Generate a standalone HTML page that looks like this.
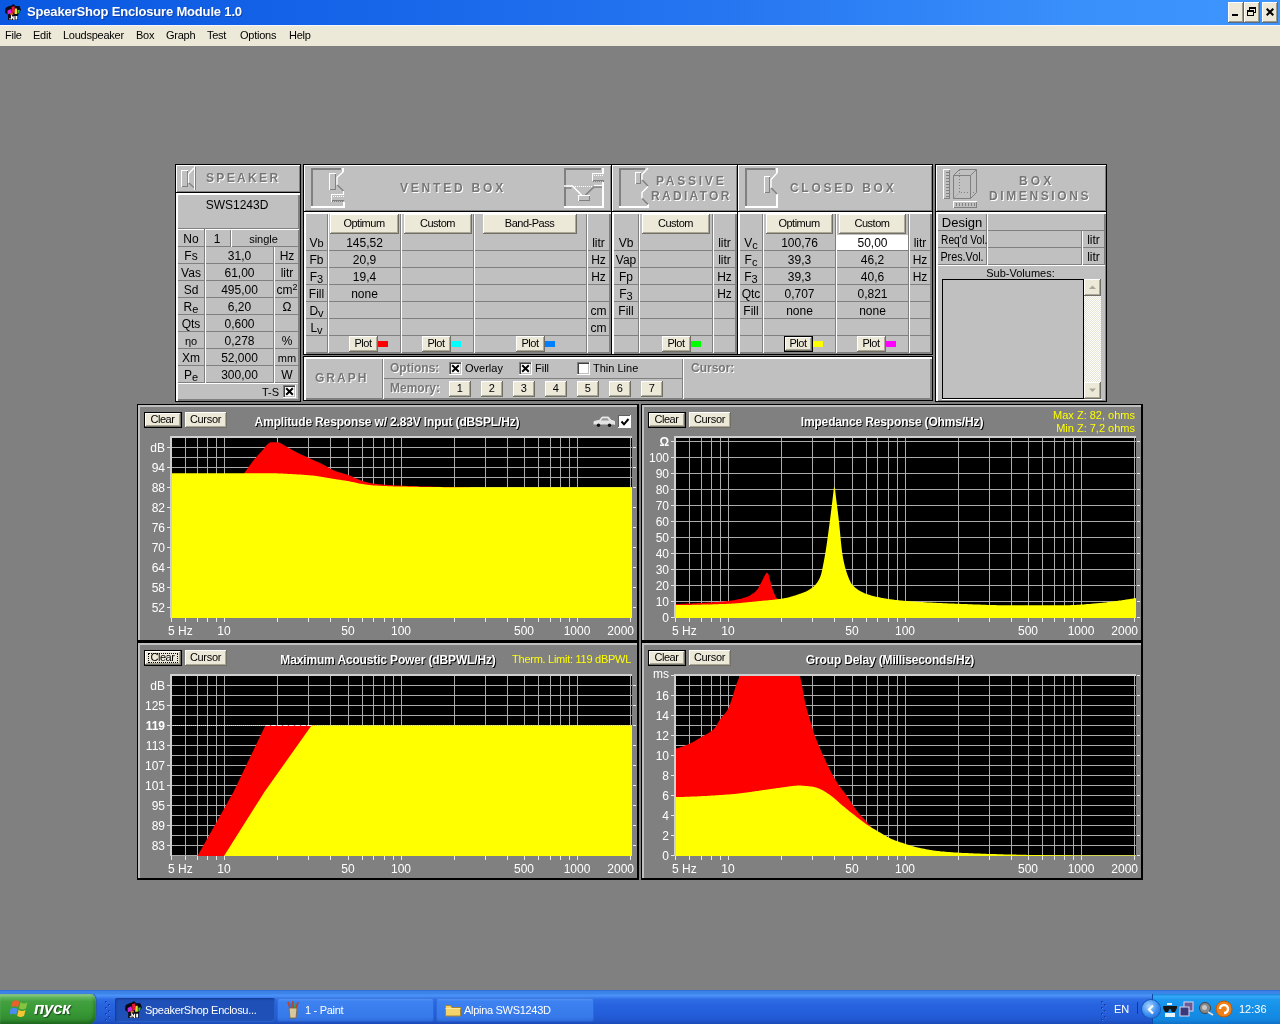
<!DOCTYPE html>
<html><head><meta charset="utf-8"><title>SpeakerShop Enclosure Module 1.0</title>
<style>
html,body{margin:0;padding:0;}
body{width:1280px;height:1024px;overflow:hidden;background:#808080;position:relative;font-family:"Liberation Sans",sans-serif;font-size:12px;color:#000;}
div,svg,span.a{position:absolute;box-sizing:border-box;}
.t{white-space:nowrap;overflow:visible;}
#root{left:0;top:0;width:1280px;height:1024px;will-change:transform;}
.hd{white-space:nowrap;font-weight:bold;color:#767676;text-shadow:1px 1px 0 #fff;letter-spacing:2.6px;font-size:12px;}
.gt{white-space:nowrap;font-weight:bold;color:#fff;text-shadow:1px 1px 0 #000;font-size:12px;}
.ax{white-space:nowrap;color:#fff;font-size:12px;}
.mn{white-space:nowrap;font-size:11px;}
</style></head><body><div id="root">
<div style="left:0px;top:0px;width:1280px;height:25px;background:linear-gradient(90deg,#0a58e0 0%,#1463e8 25%,#2574f0 55%,#3a90fb 85%,#3d95ff 100%);"></div>
<div class="t" style="left:27px;top:2px;width:300px;height:20px;line-height:20px;text-align:left;color:#fff;font-weight:bold;font-size:13px;letter-spacing:-0.17px;text-shadow:1px 1px 0 rgba(10,42,128,.55);">SpeakerShop Enclosure Module 1.0</div>
<svg style="left:5px;top:4px" width="16" height="16" viewBox="0 0 16 16"><path d="M3 2.500L6.500 1.500L8.500 0L10.500 2L14.500 2L16 6L14 9L13 11.500V16H3V11L0 8.500L0.500 4z" fill="#0a0a14"/><path d="M6.500 3l3-1 .5 6.500-3 .5z" fill="#e81830"/><path d="M2.500 6.500l3.500-1.500 1 4-4.500 1.500z" fill="#d028d8"/><path d="M10 4.500h2v5.500h-2.500z" fill="#e8e030"/><path d="M12.500 6l2.500 0-1 3-1.500 1z" fill="#38b838"/><path d="M5 9.500l3-.5 .5 1.500-3 .5z" fill="#f06020"/><rect x="4.500" y="14" width="1" height="1.500" fill="#fff"/><path d="M6.500 15.500v-3.500l2.500 3.500v-3.500" stroke="#fff" stroke-width="1.100" fill="none"/><rect x="10.500" y="12" width="1.800" height="3.500" fill="#fff"/></svg>
<div style="left:1228px;top:2px;width:16px;height:21px;background:#5a6a80;"></div>
<div style="left:1228px;top:2px;width:15px;height:20px;background:#fff;"></div>
<div style="left:1229px;top:3px;width:14px;height:19px;background:#a09a88;"></div>
<div style="left:1229px;top:3px;width:13px;height:18px;background:#ece9d8;"></div>
<div style="left:1232px;top:14px;width:6px;height:2px;background:#000;"></div>
<div style="left:1244px;top:2px;width:16px;height:21px;background:#5a6a80;"></div>
<div style="left:1244px;top:2px;width:15px;height:20px;background:#fff;"></div>
<div style="left:1245px;top:3px;width:14px;height:19px;background:#a09a88;"></div>
<div style="left:1245px;top:3px;width:13px;height:18px;background:#ece9d8;"></div>
<svg style="left:1247px;top:7px" width="10" height="10" viewBox="0 0 10 10" shape-rendering="crispEdges"><path d="M2.5 3V0.5h6v5h-2 M2.5 1.5h6" stroke="#000" fill="none"/><path d="M0.5 3.5h6v5h-6z M0.5 4.5h6" stroke="#000" fill="none"/></svg>
<div style="left:1262px;top:2px;width:16px;height:21px;background:#5a6a80;"></div>
<div style="left:1262px;top:2px;width:15px;height:20px;background:#fff;"></div>
<div style="left:1263px;top:3px;width:14px;height:19px;background:#a09a88;"></div>
<div style="left:1263px;top:3px;width:13px;height:18px;background:#ece9d8;"></div>
<svg style="left:1266px;top:8px" width="8" height="8" viewBox="0 0 8 8"><path d="M0.7 0.7 L7.3 7.3 M7.3 0.7 L0.7 7.3" stroke="#000" stroke-width="2" fill="none"/></svg>
<div style="left:0px;top:25px;width:1280px;height:21px;background:#ece9d8;"></div>
<div style="left:0px;top:25px;width:1280px;height:1px;background:#f4f6fb;"></div>
<div class="mn" style="left:5px;top:27px;width:80px;height:16px;line-height:16px;text-align:left;letter-spacing:-0.25px;">File</div>
<div class="mn" style="left:33px;top:27px;width:80px;height:16px;line-height:16px;text-align:left;letter-spacing:-0.25px;">Edit</div>
<div class="mn" style="left:63px;top:27px;width:80px;height:16px;line-height:16px;text-align:left;letter-spacing:-0.25px;">Loudspeaker</div>
<div class="mn" style="left:136px;top:27px;width:80px;height:16px;line-height:16px;text-align:left;letter-spacing:-0.25px;">Box</div>
<div class="mn" style="left:166px;top:27px;width:80px;height:16px;line-height:16px;text-align:left;letter-spacing:-0.25px;">Graph</div>
<div class="mn" style="left:207px;top:27px;width:80px;height:16px;line-height:16px;text-align:left;letter-spacing:-0.25px;">Test</div>
<div class="mn" style="left:240px;top:27px;width:80px;height:16px;line-height:16px;text-align:left;letter-spacing:-0.25px;">Options</div>
<div class="mn" style="left:289px;top:27px;width:80px;height:16px;line-height:16px;text-align:left;letter-spacing:-0.25px;">Help</div>
<div style="left:0px;top:990px;width:1280px;height:34px;background:linear-gradient(180deg,#2a62cc 0px,#3a80e6 1px,#3f86ea 4px,#4a93fa 5px,#4a90f6 6px,#2f6fe6 9px,#2864df 14px,#245edb 24px,#2157cf 30px,#1b49b8 34px);"></div>
<div style="left:0px;top:994px;width:96px;height:30px;background:linear-gradient(180deg,#5aa85a 0%,#67bb63 8%,#43a040 25%,#399a36 55%,#338f31 80%,#2a7a2a 100%);border-radius:0 4px 6px 0/0 9px 10px 0;box-shadow:1px 0 1px #2a5aa8, inset 0 2px 2px rgba(255,255,255,.25), inset -2px -2px 3px rgba(0,60,0,.35);"></div>
<div class="t" style="left:34px;top:999px;width:60px;height:20px;line-height:20px;text-align:left;color:#fff;font-weight:bold;font-style:italic;font-size:17px;letter-spacing:-0.4px;text-shadow:1px 1px 1px #1c4a1c;">пуск</div>
<svg style="left:10px;top:999px" width="20" height="19" viewBox="0 0 20 19"><path d="M2.5 2.5 q3.5-2.5 7 0 l-1.500 6 q-3.500-2.500-7 0z" fill="#e8602c"/><path d="M10.5 3.2 q3.500 2.500 7 0 l-1.500 6 q-3.500 2.500-7 0z" fill="#86c440"/><path d="M0.6 10 q3.500-2.500 7 0 l-1.500 6 q-3.500-2.500-7 0z" fill="#4a8cf0"/><path d="M8.6 10.7 q3.500 2.500 7 0 l-1.500 6 q-3.500 2.500-7 0z" fill="#f6c531"/></svg>
<div style="left:105px;top:1001px;width:2px;height:2px;background:#1a3fae;"></div>
<div style="left:106px;top:1002px;width:1px;height:1px;background:#4c88f2;"></div>
<div style="left:105px;top:1007px;width:2px;height:2px;background:#1a3fae;"></div>
<div style="left:106px;top:1008px;width:1px;height:1px;background:#4c88f2;"></div>
<div style="left:105px;top:1013px;width:2px;height:2px;background:#1a3fae;"></div>
<div style="left:106px;top:1014px;width:1px;height:1px;background:#4c88f2;"></div>
<div style="left:105px;top:1019px;width:2px;height:2px;background:#1a3fae;"></div>
<div style="left:106px;top:1020px;width:1px;height:1px;background:#4c88f2;"></div>
<div style="left:108px;top:1004px;width:2px;height:2px;background:#1a3fae;"></div>
<div style="left:109px;top:1005px;width:1px;height:1px;background:#4c88f2;"></div>
<div style="left:108px;top:1010px;width:2px;height:2px;background:#1a3fae;"></div>
<div style="left:109px;top:1011px;width:1px;height:1px;background:#4c88f2;"></div>
<div style="left:108px;top:1016px;width:2px;height:2px;background:#1a3fae;"></div>
<div style="left:109px;top:1017px;width:1px;height:1px;background:#4c88f2;"></div>
<div style="left:1101px;top:1001px;width:2px;height:2px;background:#1a3fae;"></div>
<div style="left:1102px;top:1002px;width:1px;height:1px;background:#4c88f2;"></div>
<div style="left:1101px;top:1007px;width:2px;height:2px;background:#1a3fae;"></div>
<div style="left:1102px;top:1008px;width:1px;height:1px;background:#4c88f2;"></div>
<div style="left:1101px;top:1013px;width:2px;height:2px;background:#1a3fae;"></div>
<div style="left:1102px;top:1014px;width:1px;height:1px;background:#4c88f2;"></div>
<div style="left:1101px;top:1019px;width:2px;height:2px;background:#1a3fae;"></div>
<div style="left:1102px;top:1020px;width:1px;height:1px;background:#4c88f2;"></div>
<div style="left:1104px;top:1004px;width:2px;height:2px;background:#1a3fae;"></div>
<div style="left:1105px;top:1005px;width:1px;height:1px;background:#4c88f2;"></div>
<div style="left:1104px;top:1010px;width:2px;height:2px;background:#1a3fae;"></div>
<div style="left:1105px;top:1011px;width:1px;height:1px;background:#4c88f2;"></div>
<div style="left:1104px;top:1016px;width:2px;height:2px;background:#1a3fae;"></div>
<div style="left:1105px;top:1017px;width:1px;height:1px;background:#4c88f2;"></div>
<div style="left:115px;top:998px;width:160px;height:24px;background:#1e50b8;border-radius:3px;box-shadow:inset 1px 1px 2px #153a90, inset -1px -1px 0 #2a62cc;"></div>

<div class="t" style="left:145px;top:1002px;width:128px;height:16px;line-height:16px;text-align:left;color:#fff;font-size:11px;letter-spacing:-0.3px;">SpeakerShop Enclosu...</div>
<svg style="left:125px;top:1001px" width="17" height="17" viewBox="0 0 16 16"><path d="M3 2.500L6.500 1.500L8.500 0L10.500 2L14.500 2L16 6L14 9L13 11.500V16H3V11L0 8.500L0.500 4z" fill="#0a0a14"/><path d="M6.500 3l3-1 .5 6.500-3 .5z" fill="#e81830"/><path d="M2.500 6.500l3.500-1.500 1 4-4.500 1.500z" fill="#d028d8"/><path d="M10 4.500h2v5.500h-2.500z" fill="#e8e030"/><path d="M12.500 6l2.500 0-1 3-1.500 1z" fill="#38b838"/><path d="M5 9.500l3-.5 .5 1.500-3 .5z" fill="#f06020"/><rect x="4.500" y="14" width="1" height="1.500" fill="#fff"/><path d="M6.500 15.500v-3.500l2.500 3.500v-3.500" stroke="#fff" stroke-width="1.100" fill="none"/><rect x="10.500" y="12" width="1.800" height="3.500" fill="#fff"/></svg>
<div style="left:277px;top:998px;width:157px;height:24px;border-radius:3px;background:linear-gradient(180deg,#5a9cf8 0%,#3d82f0 14%,#3779ea 80%,#2c68d6 100%);box-shadow:inset 0 0 0 1px rgba(36,80,190,.45);"></div>
<svg style="left:286px;top:1001px" width="14" height="18" viewBox="0 0 14 18"><path d="M3 7h8l-1 10H4z" fill="#d8c8a0" stroke="#806030" stroke-width=".8"/><path d="M4 7L2 1M7 7V0M10 7l2-6" stroke="#c04020" stroke-width="1.6"/><path d="M5.5 7L5 2" stroke="#3070d0" stroke-width="1.4"/><path d="M8.5 7L9.5 2" stroke="#30a040" stroke-width="1.4"/></svg>
<div class="t" style="left:305px;top:1002px;width:125px;height:16px;line-height:16px;text-align:left;color:#fff;font-size:11px;letter-spacing:-0.3px;">1 - Paint</div>
<div style="left:436px;top:998px;width:158px;height:24px;border-radius:3px;background:linear-gradient(180deg,#5a9cf8 0%,#3d82f0 14%,#3779ea 80%,#2c68d6 100%);box-shadow:inset 0 0 0 1px rgba(36,80,190,.45);"></div>
<svg style="left:445px;top:1003px" width="16" height="14" viewBox="0 0 16 14"><path d="M0.5 2.5h5l1.500 2h8.500v8.500h-15z" fill="#f4d36a" stroke="#a8842a"/><path d="M0.5 5.5h15" stroke="#fbe9a0"/></svg>
<div class="t" style="left:464px;top:1002px;width:126px;height:16px;line-height:16px;text-align:left;color:#fff;font-size:11px;letter-spacing:-0.3px;">Alpina SWS1243D</div>
<div style="left:1152px;top:994px;width:128px;height:30px;background:linear-gradient(180deg,#1a86e0 0%,#36a8f6 8%,#1c98ee 20%,#1590e8 50%,#1387e0 85%,#0f70c8 100%);border-left:1px solid #0e4aa8;"></div>
<div class="t" style="left:1114px;top:1001px;width:20px;height:16px;line-height:16px;text-align:left;color:#fff;font-size:11px;">EN</div>
<div style="left:1137px;top:1002px;width:1px;height:12px;background:#16378f;"></div>
<div style="left:1142px;top:1000px;width:18px;height:18px;border-radius:50%;background:radial-gradient(circle at 40% 35%,#a8d6ff,#3a8cf0 55%,#1a5cc8);box-shadow:0 0 0 1px #1a58b8;"></div>
<svg style="left:1146px;top:1004px" width="10" height="11" viewBox="0 0 10 11"><path d="M7 1.5L3 5.5l4 4" stroke="#fff" stroke-width="2.2" fill="none"/></svg>
<svg style="left:1162px;top:1002px" width="16" height="16" viewBox="0 0 16 16"><path d="M1 4h14v2l-2 4h-3L8.5 7h-1L6 10H3L1 6z" fill="#151515"/><rect x="3" y="11" width="10" height="4" fill="#fff" opacity=".9"/><rect x="5" y="1" width="5" height="2" fill="#eee"/></svg>
<svg style="left:1179px;top:1001px" width="16" height="17" viewBox="0 0 16 17"><rect x="5" y="1" width="9" height="9" fill="#6a5a9a" stroke="#d8d8f0"/><rect x="1" y="6" width="9" height="9" fill="#3a3a7a" stroke="#d8d8f0"/></svg>
<svg style="left:1198px;top:1001px" width="17" height="17" viewBox="0 0 17 17"><circle cx="7" cy="7" r="5.5" fill="#8a8a8a" stroke="#444"/><circle cx="6.5" cy="6.500" r="2.500" fill="#c8c8c8"/><path d="M10 11l5 3" stroke="#ddd" stroke-width="2"/></svg>
<svg style="left:1215px;top:1000px" width="18" height="18" viewBox="0 0 18 18"><circle cx="9" cy="9" r="8" fill="#f08018" stroke="#c05808"/><path d="M5 9a4 4 0 1 1 4 4" stroke="#fff" stroke-width="2.4" fill="none"/></svg>
<div class="t" style="left:1239px;top:1001px;width:40px;height:16px;line-height:16px;text-align:left;color:#fff;font-size:11px;">12:36</div>
<div style="left:175px;top:164px;width:126px;height:238px;background:#000;"></div>
<div style="left:176px;top:165px;width:124px;height:27px;background:#fff;"></div>
<div style="left:177px;top:166px;width:123px;height:26px;background:#808080;"></div>
<div style="left:177px;top:166px;width:122px;height:25px;background:#c0c0c0;"></div>
<div style="left:176px;top:193px;width:124px;height:208px;background:#fff;"></div>
<div style="left:178px;top:195px;width:122px;height:206px;background:#808080;"></div>
<div style="left:178px;top:195px;width:121px;height:205px;background:#c0c0c0;"></div>
<div class="hd" style="left:206px;top:170px;width:80px;height:16px;line-height:16px;text-align:left;letter-spacing:2.35px;">SPEAKER</div>
<div style="left:178px;top:228px;width:121px;height:1px;background:#808080;"></div>
<div style="left:298px;top:195px;width:1px;height:34px;background:#808080;"></div>
<div class="t" style="left:177px;top:197px;width:120px;height:16px;line-height:16px;text-align:center;">SWS1243D</div>
<div style="left:178px;top:229px;width:27px;height:1px;background:#fff;"></div>
<div style="left:204px;top:229px;width:1px;height:154px;background:#808080;"></div>
<div style="left:178px;top:382px;width:27px;height:1px;background:#808080;"></div>
<div style="left:178px;top:246px;width:26px;height:1px;background:#808080;"></div>
<div style="left:178px;top:263px;width:26px;height:1px;background:#808080;"></div>
<div style="left:178px;top:280px;width:26px;height:1px;background:#808080;"></div>
<div style="left:178px;top:297px;width:26px;height:1px;background:#808080;"></div>
<div style="left:178px;top:314px;width:26px;height:1px;background:#808080;"></div>
<div style="left:178px;top:331px;width:26px;height:1px;background:#808080;"></div>
<div style="left:178px;top:348px;width:26px;height:1px;background:#808080;"></div>
<div style="left:178px;top:365px;width:26px;height:1px;background:#808080;"></div>
<div style="left:205px;top:247px;width:1px;height:136px;background:#fff;"></div>
<div style="left:273px;top:247px;width:1px;height:136px;background:#808080;"></div>
<div style="left:206px;top:382px;width:68px;height:1px;background:#808080;"></div>
<div style="left:206px;top:263px;width:67px;height:1px;background:#808080;"></div>
<div style="left:206px;top:280px;width:67px;height:1px;background:#808080;"></div>
<div style="left:206px;top:297px;width:67px;height:1px;background:#808080;"></div>
<div style="left:206px;top:314px;width:67px;height:1px;background:#808080;"></div>
<div style="left:206px;top:331px;width:67px;height:1px;background:#808080;"></div>
<div style="left:206px;top:348px;width:67px;height:1px;background:#808080;"></div>
<div style="left:206px;top:365px;width:67px;height:1px;background:#808080;"></div>
<div style="left:274px;top:247px;width:1px;height:136px;background:#fff;"></div>
<div style="left:298px;top:247px;width:1px;height:136px;background:#808080;"></div>
<div style="left:275px;top:382px;width:24px;height:1px;background:#808080;"></div>
<div style="left:275px;top:263px;width:23px;height:1px;background:#808080;"></div>
<div style="left:275px;top:280px;width:23px;height:1px;background:#808080;"></div>
<div style="left:275px;top:297px;width:23px;height:1px;background:#808080;"></div>
<div style="left:275px;top:314px;width:23px;height:1px;background:#808080;"></div>
<div style="left:275px;top:331px;width:23px;height:1px;background:#808080;"></div>
<div style="left:275px;top:348px;width:23px;height:1px;background:#808080;"></div>
<div style="left:275px;top:365px;width:23px;height:1px;background:#808080;"></div>
<div style="left:205px;top:229px;width:94px;height:1px;background:#fff;"></div>
<div style="left:205px;top:230px;width:1px;height:17px;background:#fff;"></div>
<div style="left:230px;top:230px;width:1px;height:17px;background:#808080;"></div>
<div style="left:206px;top:246px;width:25px;height:1px;background:#808080;"></div>
<div style="left:231px;top:230px;width:1px;height:17px;background:#fff;"></div>
<div style="left:298px;top:230px;width:1px;height:17px;background:#808080;"></div>
<div style="left:232px;top:246px;width:67px;height:1px;background:#808080;"></div>
<div class="t" style="left:178px;top:231px;width:26px;height:16px;line-height:16px;text-align:center;">No</div>
<div class="t" style="left:178px;top:248px;width:26px;height:16px;line-height:16px;text-align:center;">Fs</div>
<div class="t" style="left:206px;top:248px;width:67px;height:16px;line-height:16px;text-align:center;">31,0</div>
<div class="t" style="left:275px;top:248px;width:24px;height:16px;line-height:16px;text-align:center;">Hz</div>
<div class="t" style="left:178px;top:265px;width:26px;height:16px;line-height:16px;text-align:center;">Vas</div>
<div class="t" style="left:206px;top:265px;width:67px;height:16px;line-height:16px;text-align:center;">61,00</div>
<div class="t" style="left:275px;top:265px;width:24px;height:16px;line-height:16px;text-align:center;">litr</div>
<div class="t" style="left:178px;top:282px;width:26px;height:16px;line-height:16px;text-align:center;">Sd</div>
<div class="t" style="left:206px;top:282px;width:67px;height:16px;line-height:16px;text-align:center;">495,00</div>
<div class="t" style="left:275px;top:282px;width:24px;height:16px;line-height:16px;text-align:center;">cm<span style="font-size:9px;position:relative;top:-4px;">2</span></div>
<div class="t" style="left:178px;top:299px;width:26px;height:16px;line-height:16px;text-align:center;">R<span style="font-size:11px;position:relative;top:1.500px;">e</span></div>
<div class="t" style="left:206px;top:299px;width:67px;height:16px;line-height:16px;text-align:center;">6,20</div>
<div class="t" style="left:275px;top:299px;width:24px;height:16px;line-height:16px;text-align:center;">Ω</div>
<div class="t" style="left:178px;top:316px;width:26px;height:16px;line-height:16px;text-align:center;">Qts</div>
<div class="t" style="left:206px;top:316px;width:67px;height:16px;line-height:16px;text-align:center;">0,600</div>
<div class="t" style="left:178px;top:333px;width:26px;height:16px;line-height:16px;text-align:center;"><span style="font-size:11px">ηo</span></div>
<div class="t" style="left:206px;top:333px;width:67px;height:16px;line-height:16px;text-align:center;">0,278</div>
<div class="t" style="left:275px;top:333px;width:24px;height:16px;line-height:16px;text-align:center;">%</div>
<div class="t" style="left:178px;top:350px;width:26px;height:16px;line-height:16px;text-align:center;">Xm</div>
<div class="t" style="left:206px;top:350px;width:67px;height:16px;line-height:16px;text-align:center;">52,000</div>
<div class="t" style="left:275px;top:350px;width:24px;height:16px;line-height:16px;text-align:center;"><span style="font-size:11px">mm</span></div>
<div class="t" style="left:178px;top:367px;width:26px;height:16px;line-height:16px;text-align:center;">P<span style="font-size:11px;position:relative;top:1.500px;">e</span></div>
<div class="t" style="left:206px;top:367px;width:67px;height:16px;line-height:16px;text-align:center;">300,00</div>
<div class="t" style="left:275px;top:367px;width:24px;height:16px;line-height:16px;text-align:center;">W</div>
<div class="t" style="left:205px;top:231px;width:24px;height:16px;line-height:16px;text-align:center;">1</div>
<div class="t" style="left:231px;top:231px;width:65px;height:16px;line-height:16px;text-align:center;font-size:11px;">single</div>
<div style="left:178px;top:383px;width:121px;height:1px;background:#fff;"></div>
<div style="left:178px;top:399px;width:121px;height:1px;background:#808080;"></div>
<div style="left:298px;top:383px;width:1px;height:17px;background:#808080;"></div>
<div class="t" style="left:249px;top:384px;width:30px;height:16px;line-height:16px;text-align:right;font-size:11px;">T-S</div>
<div style="left:283px;top:385px;width:13px;height:13px;background:#fff;"></div>
<div style="left:283px;top:385px;width:12px;height:12px;background:#808080;"></div>
<div style="left:284px;top:386px;width:12px;height:12px;background:#fff;"></div>
<div style="left:284px;top:386px;width:11px;height:11px;background:#404040;"></div>
<div style="left:285px;top:387px;width:10px;height:10px;background:#c0c0c0;"></div>
<div style="left:285px;top:387px;width:9px;height:9px;background:#fff;"></div>
<svg style="left:285px;top:387px" width="9" height="9" viewBox="0 0 9 9"><path d="M1.2 1.2 L7.8 7.8 M7.8 1.2 L1.2 7.8" stroke="#000" stroke-width="2" fill="none"/></svg>
<div style="left:303px;top:164px;width:630px;height:191px;background:#000;"></div>
<div style="left:304px;top:165px;width:307px;height:46px;background:#fff;"></div>
<div style="left:305px;top:166px;width:306px;height:45px;background:#808080;"></div>
<div style="left:305px;top:166px;width:305px;height:44px;background:#c0c0c0;"></div>
<div style="left:304px;top:212px;width:307px;height:142px;background:#fff;"></div>
<div style="left:306px;top:214px;width:305px;height:140px;background:#808080;"></div>
<div style="left:306px;top:214px;width:304px;height:139px;background:#c0c0c0;"></div>
<div style="left:612px;top:165px;width:125px;height:46px;background:#fff;"></div>
<div style="left:613px;top:166px;width:124px;height:45px;background:#808080;"></div>
<div style="left:613px;top:166px;width:123px;height:44px;background:#c0c0c0;"></div>
<div style="left:612px;top:212px;width:125px;height:142px;background:#fff;"></div>
<div style="left:614px;top:214px;width:123px;height:140px;background:#808080;"></div>
<div style="left:614px;top:214px;width:122px;height:139px;background:#c0c0c0;"></div>
<div style="left:738px;top:165px;width:194px;height:46px;background:#fff;"></div>
<div style="left:739px;top:166px;width:193px;height:45px;background:#808080;"></div>
<div style="left:739px;top:166px;width:192px;height:44px;background:#c0c0c0;"></div>
<div style="left:738px;top:212px;width:194px;height:142px;background:#fff;"></div>
<div style="left:740px;top:214px;width:192px;height:140px;background:#808080;"></div>
<div style="left:740px;top:214px;width:191px;height:139px;background:#c0c0c0;"></div>
<div class="hd" style="left:400px;top:180px;width:150px;height:16px;line-height:16px;text-align:left;letter-spacing:2.8px;">VENTED BOX</div>
<div style="left:327px;top:214px;width:1px;height:139px;background:#808080;"></div>
<div style="left:306px;top:352px;width:22px;height:1px;background:#808080;"></div>
<div style="left:306px;top:250px;width:21px;height:1px;background:#808080;"></div>
<div style="left:306px;top:267px;width:21px;height:1px;background:#808080;"></div>
<div style="left:306px;top:284px;width:21px;height:1px;background:#808080;"></div>
<div style="left:306px;top:301px;width:21px;height:1px;background:#808080;"></div>
<div style="left:306px;top:318px;width:21px;height:1px;background:#808080;"></div>
<div style="left:306px;top:335px;width:21px;height:1px;background:#808080;"></div>
<div style="left:328px;top:214px;width:1px;height:139px;background:#fff;"></div>
<div style="left:400px;top:214px;width:1px;height:139px;background:#808080;"></div>
<div style="left:329px;top:352px;width:72px;height:1px;background:#808080;"></div>
<div style="left:329px;top:250px;width:71px;height:1px;background:#808080;"></div>
<div style="left:329px;top:267px;width:71px;height:1px;background:#808080;"></div>
<div style="left:329px;top:284px;width:71px;height:1px;background:#808080;"></div>
<div style="left:329px;top:301px;width:71px;height:1px;background:#808080;"></div>
<div style="left:329px;top:318px;width:71px;height:1px;background:#808080;"></div>
<div style="left:329px;top:335px;width:71px;height:1px;background:#808080;"></div>
<div style="left:401px;top:214px;width:1px;height:139px;background:#fff;"></div>
<div style="left:473px;top:214px;width:1px;height:139px;background:#808080;"></div>
<div style="left:402px;top:352px;width:72px;height:1px;background:#808080;"></div>
<div style="left:402px;top:250px;width:71px;height:1px;background:#808080;"></div>
<div style="left:402px;top:267px;width:71px;height:1px;background:#808080;"></div>
<div style="left:402px;top:284px;width:71px;height:1px;background:#808080;"></div>
<div style="left:402px;top:301px;width:71px;height:1px;background:#808080;"></div>
<div style="left:402px;top:318px;width:71px;height:1px;background:#808080;"></div>
<div style="left:402px;top:335px;width:71px;height:1px;background:#808080;"></div>
<div style="left:474px;top:214px;width:1px;height:139px;background:#fff;"></div>
<div style="left:586px;top:214px;width:1px;height:139px;background:#808080;"></div>
<div style="left:475px;top:352px;width:112px;height:1px;background:#808080;"></div>
<div style="left:475px;top:250px;width:111px;height:1px;background:#808080;"></div>
<div style="left:475px;top:267px;width:111px;height:1px;background:#808080;"></div>
<div style="left:475px;top:284px;width:111px;height:1px;background:#808080;"></div>
<div style="left:475px;top:301px;width:111px;height:1px;background:#808080;"></div>
<div style="left:475px;top:318px;width:111px;height:1px;background:#808080;"></div>
<div style="left:475px;top:335px;width:111px;height:1px;background:#808080;"></div>
<div style="left:587px;top:214px;width:1px;height:139px;background:#fff;"></div>
<div style="left:609px;top:214px;width:1px;height:139px;background:#808080;"></div>
<div style="left:588px;top:352px;width:22px;height:1px;background:#808080;"></div>
<div style="left:588px;top:250px;width:21px;height:1px;background:#808080;"></div>
<div style="left:588px;top:267px;width:21px;height:1px;background:#808080;"></div>
<div style="left:588px;top:284px;width:21px;height:1px;background:#808080;"></div>
<div style="left:588px;top:301px;width:21px;height:1px;background:#808080;"></div>
<div style="left:588px;top:318px;width:21px;height:1px;background:#808080;"></div>
<div style="left:588px;top:335px;width:21px;height:1px;background:#808080;"></div>
<div class="t" style="left:306px;top:235px;width:21px;height:16px;line-height:16px;text-align:center;">V<span style="font-size:11px">b</span></div>
<div class="t" style="left:306px;top:252px;width:21px;height:16px;line-height:16px;text-align:center;">Fb</div>
<div class="t" style="left:306px;top:269px;width:21px;height:16px;line-height:16px;text-align:center;">F<span style="font-size:11px;position:relative;top:1.500px;">3</span></div>
<div class="t" style="left:306px;top:286px;width:21px;height:16px;line-height:16px;text-align:center;">Fill</div>
<div class="t" style="left:306px;top:303px;width:21px;height:16px;line-height:16px;text-align:center;">D<span style="font-size:11px;position:relative;top:1.500px;">v</span></div>
<div class="t" style="left:306px;top:320px;width:21px;height:16px;line-height:16px;text-align:center;">L<span style="font-size:11px;position:relative;top:1.500px;">v</span></div>
<div class="t" style="left:329px;top:235px;width:71px;height:16px;line-height:16px;text-align:center;">145,52</div>
<div class="t" style="left:329px;top:252px;width:71px;height:16px;line-height:16px;text-align:center;">20,9</div>
<div class="t" style="left:329px;top:269px;width:71px;height:16px;line-height:16px;text-align:center;">19,4</div>
<div class="t" style="left:329px;top:286px;width:71px;height:16px;line-height:16px;text-align:center;">none</div>
<div class="t" style="left:588px;top:235px;width:21px;height:16px;line-height:16px;text-align:center;">litr</div>
<div class="t" style="left:588px;top:252px;width:21px;height:16px;line-height:16px;text-align:center;">Hz</div>
<div class="t" style="left:588px;top:269px;width:21px;height:16px;line-height:16px;text-align:center;">Hz</div>
<div class="t" style="left:588px;top:303px;width:21px;height:16px;line-height:16px;text-align:center;">cm</div>
<div class="t" style="left:588px;top:320px;width:21px;height:16px;line-height:16px;text-align:center;">cm</div>
<div style="left:330px;top:214px;width:69px;height:20px;background:#716f64;"></div>
<div style="left:330px;top:214px;width:68px;height:19px;background:#fff;"></div>
<div style="left:331px;top:215px;width:67px;height:18px;background:#aca899;"></div>
<div style="left:331px;top:215px;width:66px;height:17px;background:#ece9d8;"></div>
<div class="t" style="left:330px;top:213px;width:68px;height:20px;line-height:20px;text-align:center;font-size:11px;letter-spacing:-0.5px;">Optimum</div>
<div style="left:404px;top:214px;width:68px;height:20px;background:#716f64;"></div>
<div style="left:404px;top:214px;width:67px;height:19px;background:#fff;"></div>
<div style="left:405px;top:215px;width:66px;height:18px;background:#aca899;"></div>
<div style="left:405px;top:215px;width:65px;height:17px;background:#ece9d8;"></div>
<div class="t" style="left:404px;top:213px;width:67px;height:20px;line-height:20px;text-align:center;font-size:11px;letter-spacing:-0.5px;">Custom</div>
<div style="left:483px;top:214px;width:94px;height:20px;background:#716f64;"></div>
<div style="left:483px;top:214px;width:93px;height:19px;background:#fff;"></div>
<div style="left:484px;top:215px;width:92px;height:18px;background:#aca899;"></div>
<div style="left:484px;top:215px;width:91px;height:17px;background:#ece9d8;"></div>
<div class="t" style="left:483px;top:213px;width:93px;height:20px;line-height:20px;text-align:center;font-size:11px;letter-spacing:-0.5px;">Band-Pass</div>
<div style="left:349px;top:336px;width:29px;height:16px;background:#716f64;"></div>
<div style="left:349px;top:336px;width:28px;height:15px;background:#fff;"></div>
<div style="left:350px;top:337px;width:27px;height:14px;background:#aca899;"></div>
<div style="left:350px;top:337px;width:26px;height:13px;background:#ece9d8;"></div>
<div class="t" style="left:349px;top:335px;width:28px;height:16px;line-height:16px;text-align:center;font-size:11px;letter-spacing:-0.5px;">Plot</div>
<div style="left:378px;top:341px;width:10px;height:6px;background:#ff0000;"></div>
<div style="left:422px;top:336px;width:29px;height:16px;background:#716f64;"></div>
<div style="left:422px;top:336px;width:28px;height:15px;background:#fff;"></div>
<div style="left:423px;top:337px;width:27px;height:14px;background:#aca899;"></div>
<div style="left:423px;top:337px;width:26px;height:13px;background:#ece9d8;"></div>
<div class="t" style="left:422px;top:335px;width:28px;height:16px;line-height:16px;text-align:center;font-size:11px;letter-spacing:-0.5px;">Plot</div>
<div style="left:451px;top:341px;width:10px;height:6px;background:#00ffff;"></div>
<div style="left:516px;top:336px;width:29px;height:16px;background:#716f64;"></div>
<div style="left:516px;top:336px;width:28px;height:15px;background:#fff;"></div>
<div style="left:517px;top:337px;width:27px;height:14px;background:#aca899;"></div>
<div style="left:517px;top:337px;width:26px;height:13px;background:#ece9d8;"></div>
<div class="t" style="left:516px;top:335px;width:28px;height:16px;line-height:16px;text-align:center;font-size:11px;letter-spacing:-0.5px;">Plot</div>
<div style="left:545px;top:341px;width:10px;height:6px;background:#0080ff;"></div>
<div class="hd" style="left:656px;top:173px;width:80px;height:16px;line-height:16px;text-align:left;letter-spacing:2.75px;">PASSIVE</div>
<div class="hd" style="left:651px;top:188px;width:85px;height:16px;line-height:16px;text-align:left;letter-spacing:2.3px;">RADIATOR</div>
<div style="left:638px;top:214px;width:1px;height:139px;background:#808080;"></div>
<div style="left:614px;top:352px;width:25px;height:1px;background:#808080;"></div>
<div style="left:614px;top:250px;width:24px;height:1px;background:#808080;"></div>
<div style="left:614px;top:267px;width:24px;height:1px;background:#808080;"></div>
<div style="left:614px;top:284px;width:24px;height:1px;background:#808080;"></div>
<div style="left:614px;top:301px;width:24px;height:1px;background:#808080;"></div>
<div style="left:614px;top:318px;width:24px;height:1px;background:#808080;"></div>
<div style="left:614px;top:335px;width:24px;height:1px;background:#808080;"></div>
<div style="left:639px;top:214px;width:1px;height:139px;background:#fff;"></div>
<div style="left:712px;top:214px;width:1px;height:139px;background:#808080;"></div>
<div style="left:640px;top:352px;width:73px;height:1px;background:#808080;"></div>
<div style="left:640px;top:250px;width:72px;height:1px;background:#808080;"></div>
<div style="left:640px;top:267px;width:72px;height:1px;background:#808080;"></div>
<div style="left:640px;top:284px;width:72px;height:1px;background:#808080;"></div>
<div style="left:640px;top:301px;width:72px;height:1px;background:#808080;"></div>
<div style="left:640px;top:318px;width:72px;height:1px;background:#808080;"></div>
<div style="left:640px;top:335px;width:72px;height:1px;background:#808080;"></div>
<div style="left:713px;top:214px;width:1px;height:139px;background:#fff;"></div>
<div style="left:735px;top:214px;width:1px;height:139px;background:#808080;"></div>
<div style="left:714px;top:352px;width:22px;height:1px;background:#808080;"></div>
<div style="left:714px;top:250px;width:21px;height:1px;background:#808080;"></div>
<div style="left:714px;top:267px;width:21px;height:1px;background:#808080;"></div>
<div style="left:714px;top:284px;width:21px;height:1px;background:#808080;"></div>
<div style="left:714px;top:301px;width:21px;height:1px;background:#808080;"></div>
<div style="left:714px;top:318px;width:21px;height:1px;background:#808080;"></div>
<div style="left:714px;top:335px;width:21px;height:1px;background:#808080;"></div>
<div class="t" style="left:614px;top:235px;width:24px;height:16px;line-height:16px;text-align:center;">Vb</div>
<div class="t" style="left:614px;top:252px;width:24px;height:16px;line-height:16px;text-align:center;">Vap</div>
<div class="t" style="left:614px;top:269px;width:24px;height:16px;line-height:16px;text-align:center;">Fp</div>
<div class="t" style="left:614px;top:286px;width:24px;height:16px;line-height:16px;text-align:center;">F<span style="font-size:11px;position:relative;top:1.500px;">3</span></div>
<div class="t" style="left:614px;top:303px;width:24px;height:16px;line-height:16px;text-align:center;">Fill</div>
<div class="t" style="left:714px;top:235px;width:21px;height:16px;line-height:16px;text-align:center;">litr</div>
<div class="t" style="left:714px;top:252px;width:21px;height:16px;line-height:16px;text-align:center;">litr</div>
<div class="t" style="left:714px;top:269px;width:21px;height:16px;line-height:16px;text-align:center;">Hz</div>
<div class="t" style="left:714px;top:286px;width:21px;height:16px;line-height:16px;text-align:center;">Hz</div>
<div style="left:642px;top:214px;width:68px;height:20px;background:#716f64;"></div>
<div style="left:642px;top:214px;width:67px;height:19px;background:#fff;"></div>
<div style="left:643px;top:215px;width:66px;height:18px;background:#aca899;"></div>
<div style="left:643px;top:215px;width:65px;height:17px;background:#ece9d8;"></div>
<div class="t" style="left:642px;top:213px;width:67px;height:20px;line-height:20px;text-align:center;font-size:11px;letter-spacing:-0.5px;">Custom</div>
<div style="left:662px;top:336px;width:29px;height:16px;background:#716f64;"></div>
<div style="left:662px;top:336px;width:28px;height:15px;background:#fff;"></div>
<div style="left:663px;top:337px;width:27px;height:14px;background:#aca899;"></div>
<div style="left:663px;top:337px;width:26px;height:13px;background:#ece9d8;"></div>
<div class="t" style="left:662px;top:335px;width:28px;height:16px;line-height:16px;text-align:center;font-size:11px;letter-spacing:-0.5px;">Plot</div>
<div style="left:691px;top:341px;width:10px;height:6px;background:#00ff00;"></div>
<div class="hd" style="left:790px;top:180px;width:130px;height:16px;line-height:16px;text-align:left;letter-spacing:2.7px;">CLOSED BOX</div>
<div style="left:762px;top:214px;width:1px;height:139px;background:#808080;"></div>
<div style="left:740px;top:352px;width:23px;height:1px;background:#808080;"></div>
<div style="left:740px;top:250px;width:22px;height:1px;background:#808080;"></div>
<div style="left:740px;top:267px;width:22px;height:1px;background:#808080;"></div>
<div style="left:740px;top:284px;width:22px;height:1px;background:#808080;"></div>
<div style="left:740px;top:301px;width:22px;height:1px;background:#808080;"></div>
<div style="left:740px;top:318px;width:22px;height:1px;background:#808080;"></div>
<div style="left:740px;top:335px;width:22px;height:1px;background:#808080;"></div>
<div style="left:763px;top:214px;width:1px;height:139px;background:#fff;"></div>
<div style="left:835px;top:214px;width:1px;height:139px;background:#808080;"></div>
<div style="left:764px;top:352px;width:72px;height:1px;background:#808080;"></div>
<div style="left:764px;top:250px;width:71px;height:1px;background:#808080;"></div>
<div style="left:764px;top:267px;width:71px;height:1px;background:#808080;"></div>
<div style="left:764px;top:284px;width:71px;height:1px;background:#808080;"></div>
<div style="left:764px;top:301px;width:71px;height:1px;background:#808080;"></div>
<div style="left:764px;top:318px;width:71px;height:1px;background:#808080;"></div>
<div style="left:764px;top:335px;width:71px;height:1px;background:#808080;"></div>
<div style="left:836px;top:214px;width:1px;height:139px;background:#fff;"></div>
<div style="left:908px;top:214px;width:1px;height:139px;background:#808080;"></div>
<div style="left:837px;top:352px;width:72px;height:1px;background:#808080;"></div>
<div style="left:837px;top:250px;width:71px;height:1px;background:#808080;"></div>
<div style="left:837px;top:267px;width:71px;height:1px;background:#808080;"></div>
<div style="left:837px;top:284px;width:71px;height:1px;background:#808080;"></div>
<div style="left:837px;top:301px;width:71px;height:1px;background:#808080;"></div>
<div style="left:837px;top:318px;width:71px;height:1px;background:#808080;"></div>
<div style="left:837px;top:335px;width:71px;height:1px;background:#808080;"></div>
<div style="left:909px;top:214px;width:1px;height:139px;background:#fff;"></div>
<div style="left:930px;top:214px;width:1px;height:139px;background:#808080;"></div>
<div style="left:910px;top:352px;width:21px;height:1px;background:#808080;"></div>
<div style="left:910px;top:250px;width:20px;height:1px;background:#808080;"></div>
<div style="left:910px;top:267px;width:20px;height:1px;background:#808080;"></div>
<div style="left:910px;top:284px;width:20px;height:1px;background:#808080;"></div>
<div style="left:910px;top:301px;width:20px;height:1px;background:#808080;"></div>
<div style="left:910px;top:318px;width:20px;height:1px;background:#808080;"></div>
<div style="left:910px;top:335px;width:20px;height:1px;background:#808080;"></div>
<div style="left:837px;top:235px;width:71px;height:15px;background:#fff;"></div>
<div class="t" style="left:740px;top:235px;width:22px;height:16px;line-height:16px;text-align:center;">V<span style="font-size:11px;position:relative;top:1.500px;">c</span></div>
<div class="t" style="left:740px;top:252px;width:22px;height:16px;line-height:16px;text-align:center;">F<span style="font-size:11px;position:relative;top:1.500px;">c</span></div>
<div class="t" style="left:740px;top:269px;width:22px;height:16px;line-height:16px;text-align:center;">F<span style="font-size:11px;position:relative;top:1.500px;">3</span></div>
<div class="t" style="left:740px;top:286px;width:22px;height:16px;line-height:16px;text-align:center;">Qtc</div>
<div class="t" style="left:740px;top:303px;width:22px;height:16px;line-height:16px;text-align:center;">Fill</div>
<div class="t" style="left:764px;top:235px;width:71px;height:16px;line-height:16px;text-align:center;">100,76</div>
<div class="t" style="left:764px;top:252px;width:71px;height:16px;line-height:16px;text-align:center;">39,3</div>
<div class="t" style="left:764px;top:269px;width:71px;height:16px;line-height:16px;text-align:center;">39,3</div>
<div class="t" style="left:764px;top:286px;width:71px;height:16px;line-height:16px;text-align:center;">0,707</div>
<div class="t" style="left:764px;top:303px;width:71px;height:16px;line-height:16px;text-align:center;">none</div>
<div class="t" style="left:837px;top:235px;width:71px;height:16px;line-height:16px;text-align:center;">50,00</div>
<div class="t" style="left:837px;top:252px;width:71px;height:16px;line-height:16px;text-align:center;">46,2</div>
<div class="t" style="left:837px;top:269px;width:71px;height:16px;line-height:16px;text-align:center;">40,6</div>
<div class="t" style="left:837px;top:286px;width:71px;height:16px;line-height:16px;text-align:center;">0,821</div>
<div class="t" style="left:837px;top:303px;width:71px;height:16px;line-height:16px;text-align:center;">none</div>
<div class="t" style="left:910px;top:235px;width:20px;height:16px;line-height:16px;text-align:center;">litr</div>
<div class="t" style="left:910px;top:252px;width:20px;height:16px;line-height:16px;text-align:center;">Hz</div>
<div class="t" style="left:910px;top:269px;width:20px;height:16px;line-height:16px;text-align:center;">Hz</div>
<div style="left:766px;top:214px;width:67px;height:20px;background:#716f64;"></div>
<div style="left:766px;top:214px;width:66px;height:19px;background:#fff;"></div>
<div style="left:767px;top:215px;width:65px;height:18px;background:#aca899;"></div>
<div style="left:767px;top:215px;width:64px;height:17px;background:#ece9d8;"></div>
<div class="t" style="left:766px;top:213px;width:66px;height:20px;line-height:20px;text-align:center;font-size:11px;letter-spacing:-0.5px;">Optimum</div>
<div style="left:839px;top:214px;width:67px;height:20px;background:#716f64;"></div>
<div style="left:839px;top:214px;width:66px;height:19px;background:#fff;"></div>
<div style="left:840px;top:215px;width:65px;height:18px;background:#aca899;"></div>
<div style="left:840px;top:215px;width:64px;height:17px;background:#ece9d8;"></div>
<div class="t" style="left:839px;top:213px;width:66px;height:20px;line-height:20px;text-align:center;font-size:11px;letter-spacing:-0.5px;">Custom</div>
<div style="left:784px;top:336px;width:29px;height:16px;background:#000;"></div>
<div style="left:785px;top:337px;width:27px;height:14px;background:#716f64;"></div>
<div style="left:785px;top:337px;width:26px;height:13px;background:#fff;"></div>
<div style="left:786px;top:338px;width:25px;height:12px;background:#aca899;"></div>
<div style="left:786px;top:338px;width:24px;height:11px;background:#ece9d8;"></div>
<div class="t" style="left:785px;top:336px;width:26px;height:14px;line-height:14px;text-align:center;font-size:11px;letter-spacing:-0.5px;">Plot</div>
<div style="left:813px;top:341px;width:10px;height:6px;background:#ffff00;"></div>
<div style="left:857px;top:336px;width:29px;height:16px;background:#716f64;"></div>
<div style="left:857px;top:336px;width:28px;height:15px;background:#fff;"></div>
<div style="left:858px;top:337px;width:27px;height:14px;background:#aca899;"></div>
<div style="left:858px;top:337px;width:26px;height:13px;background:#ece9d8;"></div>
<div class="t" style="left:857px;top:335px;width:28px;height:16px;line-height:16px;text-align:center;font-size:11px;letter-spacing:-0.5px;">Plot</div>
<div style="left:886px;top:341px;width:10px;height:6px;background:#ff00ff;"></div>
<div style="left:303px;top:356px;width:630px;height:45px;background:#000;"></div>
<div style="left:304px;top:357px;width:628px;height:43px;background:#fff;"></div>
<div style="left:306px;top:359px;width:626px;height:41px;background:#808080;"></div>
<div style="left:306px;top:359px;width:625px;height:40px;background:#c0c0c0;"></div>
<div style="left:382px;top:359px;width:1px;height:40px;background:#808080;"></div>
<div style="left:306px;top:398px;width:77px;height:1px;background:#808080;"></div>
<div style="left:383px;top:359px;width:1px;height:40px;background:#fff;"></div>
<div style="left:682px;top:359px;width:1px;height:40px;background:#808080;"></div>
<div style="left:384px;top:398px;width:299px;height:1px;background:#808080;"></div>
<div style="left:384px;top:378px;width:298px;height:1px;background:#808080;"></div>
<div style="left:683px;top:359px;width:1px;height:40px;background:#fff;"></div>
<div style="left:930px;top:359px;width:1px;height:40px;background:#808080;"></div>
<div style="left:684px;top:398px;width:247px;height:1px;background:#808080;"></div>
<div class="hd" style="left:315px;top:370px;width:70px;height:16px;line-height:16px;text-align:left;letter-spacing:2px;">GRAPH</div>
<div class="hd" style="left:390px;top:360px;width:60px;height:16px;line-height:16px;text-align:left;letter-spacing:0;">Options:</div>
<div class="hd" style="left:390px;top:380px;width:60px;height:16px;line-height:16px;text-align:left;letter-spacing:0;">Memory:</div>
<div class="hd" style="left:691px;top:360px;width:60px;height:16px;line-height:16px;text-align:left;letter-spacing:0;">Cursor:</div>
<div style="left:449px;top:362px;width:13px;height:13px;background:#fff;"></div>
<div style="left:449px;top:362px;width:12px;height:12px;background:#808080;"></div>
<div style="left:450px;top:363px;width:12px;height:12px;background:#fff;"></div>
<div style="left:450px;top:363px;width:11px;height:11px;background:#404040;"></div>
<div style="left:451px;top:364px;width:10px;height:10px;background:#c0c0c0;"></div>
<div style="left:451px;top:364px;width:9px;height:9px;background:#fff;"></div>
<svg style="left:451px;top:364px" width="9" height="9" viewBox="0 0 9 9"><path d="M1.2 1.2 L7.8 7.8 M7.8 1.2 L1.2 7.8" stroke="#000" stroke-width="2" fill="none"/></svg>
<div class="t" style="left:465px;top:360px;width:60px;height:16px;line-height:16px;text-align:left;font-size:11px;">Overlay</div>
<div style="left:519px;top:362px;width:13px;height:13px;background:#fff;"></div>
<div style="left:519px;top:362px;width:12px;height:12px;background:#808080;"></div>
<div style="left:520px;top:363px;width:12px;height:12px;background:#fff;"></div>
<div style="left:520px;top:363px;width:11px;height:11px;background:#404040;"></div>
<div style="left:521px;top:364px;width:10px;height:10px;background:#c0c0c0;"></div>
<div style="left:521px;top:364px;width:9px;height:9px;background:#fff;"></div>
<svg style="left:521px;top:364px" width="9" height="9" viewBox="0 0 9 9"><path d="M1.2 1.2 L7.8 7.8 M7.8 1.2 L1.2 7.8" stroke="#000" stroke-width="2" fill="none"/></svg>
<div class="t" style="left:535px;top:360px;width:60px;height:16px;line-height:16px;text-align:left;font-size:11px;">Fill</div>
<div style="left:577px;top:362px;width:13px;height:13px;background:#fff;"></div>
<div style="left:577px;top:362px;width:12px;height:12px;background:#808080;"></div>
<div style="left:578px;top:363px;width:12px;height:12px;background:#fff;"></div>
<div style="left:578px;top:363px;width:11px;height:11px;background:#404040;"></div>
<div style="left:579px;top:364px;width:10px;height:10px;background:#c0c0c0;"></div>
<div style="left:579px;top:364px;width:9px;height:9px;background:#fff;"></div>
<div class="t" style="left:593px;top:360px;width:60px;height:16px;line-height:16px;text-align:left;font-size:11px;">Thin Line</div>
<div style="left:449px;top:381px;width:22px;height:16px;background:#716f64;"></div>
<div style="left:449px;top:381px;width:21px;height:15px;background:#fff;"></div>
<div style="left:450px;top:382px;width:20px;height:14px;background:#aca899;"></div>
<div style="left:450px;top:382px;width:19px;height:13px;background:#ece9d8;"></div>
<div class="t" style="left:449px;top:380px;width:21px;height:16px;line-height:16px;text-align:center;font-size:11px;letter-spacing:-0.5px;font-size:11px;">1</div>
<div style="left:481px;top:381px;width:22px;height:16px;background:#716f64;"></div>
<div style="left:481px;top:381px;width:21px;height:15px;background:#fff;"></div>
<div style="left:482px;top:382px;width:20px;height:14px;background:#aca899;"></div>
<div style="left:482px;top:382px;width:19px;height:13px;background:#ece9d8;"></div>
<div class="t" style="left:481px;top:380px;width:21px;height:16px;line-height:16px;text-align:center;font-size:11px;letter-spacing:-0.5px;font-size:11px;">2</div>
<div style="left:513px;top:381px;width:22px;height:16px;background:#716f64;"></div>
<div style="left:513px;top:381px;width:21px;height:15px;background:#fff;"></div>
<div style="left:514px;top:382px;width:20px;height:14px;background:#aca899;"></div>
<div style="left:514px;top:382px;width:19px;height:13px;background:#ece9d8;"></div>
<div class="t" style="left:513px;top:380px;width:21px;height:16px;line-height:16px;text-align:center;font-size:11px;letter-spacing:-0.5px;font-size:11px;">3</div>
<div style="left:545px;top:381px;width:22px;height:16px;background:#716f64;"></div>
<div style="left:545px;top:381px;width:21px;height:15px;background:#fff;"></div>
<div style="left:546px;top:382px;width:20px;height:14px;background:#aca899;"></div>
<div style="left:546px;top:382px;width:19px;height:13px;background:#ece9d8;"></div>
<div class="t" style="left:545px;top:380px;width:21px;height:16px;line-height:16px;text-align:center;font-size:11px;letter-spacing:-0.5px;font-size:11px;">4</div>
<div style="left:577px;top:381px;width:22px;height:16px;background:#716f64;"></div>
<div style="left:577px;top:381px;width:21px;height:15px;background:#fff;"></div>
<div style="left:578px;top:382px;width:20px;height:14px;background:#aca899;"></div>
<div style="left:578px;top:382px;width:19px;height:13px;background:#ece9d8;"></div>
<div class="t" style="left:577px;top:380px;width:21px;height:16px;line-height:16px;text-align:center;font-size:11px;letter-spacing:-0.5px;font-size:11px;">5</div>
<div style="left:609px;top:381px;width:22px;height:16px;background:#716f64;"></div>
<div style="left:609px;top:381px;width:21px;height:15px;background:#fff;"></div>
<div style="left:610px;top:382px;width:20px;height:14px;background:#aca899;"></div>
<div style="left:610px;top:382px;width:19px;height:13px;background:#ece9d8;"></div>
<div class="t" style="left:609px;top:380px;width:21px;height:16px;line-height:16px;text-align:center;font-size:11px;letter-spacing:-0.5px;font-size:11px;">6</div>
<div style="left:641px;top:381px;width:22px;height:16px;background:#716f64;"></div>
<div style="left:641px;top:381px;width:21px;height:15px;background:#fff;"></div>
<div style="left:642px;top:382px;width:20px;height:14px;background:#aca899;"></div>
<div style="left:642px;top:382px;width:19px;height:13px;background:#ece9d8;"></div>
<div class="t" style="left:641px;top:380px;width:21px;height:16px;line-height:16px;text-align:center;font-size:11px;letter-spacing:-0.5px;font-size:11px;">7</div>
<div style="left:935px;top:164px;width:172px;height:238px;background:#000;"></div>
<div style="left:936px;top:165px;width:170px;height:46px;background:#fff;"></div>
<div style="left:937px;top:166px;width:169px;height:45px;background:#808080;"></div>
<div style="left:937px;top:166px;width:168px;height:44px;background:#c0c0c0;"></div>
<div style="left:936px;top:212px;width:170px;height:189px;background:#fff;"></div>
<div style="left:938px;top:214px;width:168px;height:187px;background:#808080;"></div>
<div style="left:938px;top:214px;width:167px;height:186px;background:#c0c0c0;"></div>
<div class="hd" style="left:1019px;top:173px;width:60px;height:16px;line-height:16px;text-align:left;letter-spacing:3.1px;">BOX</div>
<div class="hd" style="left:989px;top:188px;width:120px;height:16px;line-height:16px;text-align:left;letter-spacing:2.6px;">DIMENSIONS</div>
<div style="left:986px;top:214px;width:1px;height:51px;background:#808080;"></div>
<div style="left:938px;top:264px;width:49px;height:1px;background:#808080;"></div>
<div style="left:938px;top:230px;width:48px;height:1px;background:#808080;"></div>
<div style="left:938px;top:247px;width:48px;height:1px;background:#808080;"></div>
<div style="left:987px;top:214px;width:1px;height:17px;background:#fff;"></div>
<div style="left:1104px;top:214px;width:1px;height:17px;background:#808080;"></div>
<div style="left:988px;top:230px;width:117px;height:1px;background:#808080;"></div>
<div style="left:987px;top:231px;width:1px;height:34px;background:#fff;"></div>
<div style="left:1081px;top:231px;width:1px;height:34px;background:#808080;"></div>
<div style="left:988px;top:264px;width:94px;height:1px;background:#808080;"></div>
<div style="left:988px;top:247px;width:93px;height:1px;background:#808080;"></div>
<div style="left:1082px;top:231px;width:1px;height:34px;background:#fff;"></div>
<div style="left:1104px;top:231px;width:1px;height:34px;background:#808080;"></div>
<div style="left:1083px;top:264px;width:22px;height:1px;background:#808080;"></div>
<div style="left:1083px;top:247px;width:21px;height:1px;background:#808080;"></div>
<div style="left:938px;top:265px;width:167px;height:1px;background:#fff;"></div>
<div class="t" style="left:938px;top:215px;width:48px;height:16px;line-height:16px;text-align:center;font-size:13px;">Design</div>
<div class="t" style="left:937px;top:232px;width:51px;height:16px;line-height:16px;text-align:center;"><span style="display:inline-block;transform:scaleX(.85);transform-origin:50% 50%;">Req'd Vol.</span></div>
<div class="t" style="left:938px;top:249px;width:49px;height:16px;line-height:16px;text-align:center;"><span style="display:inline-block;transform:scaleX(.9);">Pres.Vol.</span></div>
<div class="t" style="left:1083px;top:232px;width:21px;height:16px;line-height:16px;text-align:center;">litr</div>
<div class="t" style="left:1083px;top:249px;width:21px;height:16px;line-height:16px;text-align:center;">litr</div>
<div class="t" style="left:938px;top:266px;width:165px;height:14px;line-height:14px;text-align:center;font-size:11px;">Sub-Volumes:</div>
<div style="left:942px;top:279px;width:142px;height:120px;background:#000;"></div>
<div style="left:943px;top:280px;width:140px;height:118px;background:#c0c0c0;"></div>
<div style="left:942px;top:399px;width:160px;height:1px;background:#fff;"></div>
<div style="left:1084px;top:279px;width:17px;height:120px;background:#f3f1e6;background-image:repeating-conic-gradient(#ffffff 0% 25%, #e6e3d3 0% 50%);background-size:2px 2px;"></div>
<div style="left:1084px;top:279px;width:17px;height:17px;background:#716f64;"></div>
<div style="left:1084px;top:279px;width:16px;height:16px;background:#fff;"></div>
<div style="left:1085px;top:280px;width:15px;height:15px;background:#aca899;"></div>
<div style="left:1085px;top:280px;width:14px;height:14px;background:#ece9d8;"></div>
<svg style="left:1088px;top:284px" width="9" height="7" viewBox="0 0 9 7"><path d="M1 5L4.5 1.5L8 5z" fill="#aca899"/></svg>
<div style="left:1084px;top:382px;width:17px;height:17px;background:#716f64;"></div>
<div style="left:1084px;top:382px;width:16px;height:16px;background:#fff;"></div>
<div style="left:1085px;top:383px;width:15px;height:15px;background:#aca899;"></div>
<div style="left:1085px;top:383px;width:14px;height:14px;background:#ece9d8;"></div>
<svg style="left:1088px;top:387px" width="9" height="7" viewBox="0 0 9 7"><path d="M1 1.5L4.5 5L8 1.5z" fill="#aca899"/></svg>
<svg style="left:178px;top:165px" width="20" height="27" viewBox="0 0 20 27"><path d="M3.5 22V5.5H10" stroke="#fff" stroke-width="1" fill="none" shape-rendering="crispEdges"/><path d="M9.5 6V21.5H4" stroke="#808080" stroke-width="1" fill="none" shape-rendering="crispEdges"/><path d="M10.5 18V9L15.800000000000011 3" stroke="#fff" stroke-width="1.2" fill="none" /><path d="M11 18L15.800000000000011 22.5" stroke="#808080" stroke-width="1.2" fill="none" /><path d="M16.5 1V25" stroke="#fff" stroke-width="1" fill="none" shape-rendering="crispEdges"/><path d="M17.5 2V25" stroke="#808080" stroke-width="1" fill="none" shape-rendering="crispEdges"/></svg>
<svg style="left:308px;top:166px" width="40" height="44" viewBox="0 0 40 44"><path d="M4 41V3H33" stroke="#808080" stroke-width="2" fill="none" shape-rendering="crispEdges"/><path d="M3 41H36V36" stroke="#fff" stroke-width="2" fill="none" shape-rendering="crispEdges"/><path d="M35 2V6" stroke="#fff" stroke-width="2" fill="none" shape-rendering="crispEdges"/><path d="M21.5 24V7.5H28" stroke="#fff" stroke-width="1" fill="none" shape-rendering="crispEdges"/><path d="M27.5 8V23.5H22" stroke="#808080" stroke-width="1" fill="none" shape-rendering="crispEdges"/><path d="M35.5 5.5L29 11.5V19" stroke="#fff" stroke-width="1.3" fill="none" /><path d="M29.3 19L35.5 25" stroke="#808080" stroke-width="1.3" fill="none" /><path d="M35.5 25V29" stroke="#fff" stroke-width="1.2" fill="none" /><path d="M23.5 36V28.5H36" stroke="#fff" stroke-width="1" fill="none" shape-rendering="crispEdges"/><path d="M25 30.5H36" stroke="#fff" stroke-width="1" fill="none" shape-rendering="crispEdges" stroke-dasharray="1 1"/><path d="M24 35.5H36" stroke="#808080" stroke-width="1" fill="none" shape-rendering="crispEdges" stroke-dasharray="1 1"/><path d="M24 34.5H36" stroke="#808080" stroke-width="1" fill="none" shape-rendering="crispEdges"/></svg>
<svg style="left:562px;top:166px" width="46" height="44" viewBox="0 0 46 44"><path d="M3 41V3H39" stroke="#808080" stroke-width="2" fill="none" shape-rendering="crispEdges"/><path d="M2 41H41V16" stroke="#fff" stroke-width="2" fill="none" shape-rendering="crispEdges"/><path d="M41 2V8" stroke="#fff" stroke-width="2" fill="none" shape-rendering="crispEdges"/><path d="M30.5 15V7.5H42" stroke="#fff" stroke-width="1" fill="none" shape-rendering="crispEdges"/><path d="M32 9.5H42" stroke="#fff" stroke-width="1" fill="none" shape-rendering="crispEdges" stroke-dasharray="1 1"/><path d="M31 14.5H42" stroke="#808080" stroke-width="1" fill="none" shape-rendering="crispEdges"/><path d="M31 15.5H42" stroke="#808080" stroke-width="1" fill="none" shape-rendering="crispEdges" stroke-dasharray="1 1"/><path d="M2 20H10.5L19.5 29" stroke="#fff" stroke-width="1.6" fill="none" /><path d="M4 22H9.5" stroke="#808080" stroke-width="1.4" fill="none" /><path d="M11 20.5H31" stroke="#fff" stroke-width="1" fill="none" shape-rendering="crispEdges" stroke-dasharray="1 1"/><path d="M23.5 29L32 21H40" stroke="#808080" stroke-width="1.6" fill="none" /><path d="M32 19.5H40" stroke="#fff" stroke-width="1.2" fill="none" /><path d="M16.5 35V29.5H28" stroke="#fff" stroke-width="1" fill="none" shape-rendering="crispEdges"/><path d="M27.5 30V34.5H17" stroke="#808080" stroke-width="1" fill="none" shape-rendering="crispEdges"/></svg>
<svg style="left:616px;top:166px" width="36" height="44" viewBox="0 0 36 44"><path d="M4 41V3H29" stroke="#808080" stroke-width="2" fill="none" shape-rendering="crispEdges"/><path d="M3 41H32V38" stroke="#fff" stroke-width="2" fill="none" shape-rendering="crispEdges"/><path d="M19.5 18V6.5H25" stroke="#fff" stroke-width="1" fill="none" shape-rendering="crispEdges"/><path d="M24.5 7V17.5H20" stroke="#808080" stroke-width="1" fill="none" shape-rendering="crispEdges"/><path d="M32 2L26 8.5V14" stroke="#fff" stroke-width="1.4" fill="none" /><path d="M26.299999999999955 14L32 20" stroke="#808080" stroke-width="1.4" fill="none" /><path d="M32 20.5L26 26.5V32.5" stroke="#fff" stroke-width="1.4" fill="none" /><path d="M26.299999999999955 32.5L32 38.5" stroke="#808080" stroke-width="1.4" fill="none" /></svg>
<svg style="left:742px;top:166px" width="40" height="44" viewBox="0 0 40 44"><path d="M4 41V3H33" stroke="#808080" stroke-width="2" fill="none" shape-rendering="crispEdges"/><path d="M3 41H35V28" stroke="#fff" stroke-width="2" fill="none" shape-rendering="crispEdges"/><path d="M35 2V7" stroke="#fff" stroke-width="2" fill="none" shape-rendering="crispEdges"/><path d="M22.5 27V10.5H28" stroke="#fff" stroke-width="1" fill="none" shape-rendering="crispEdges"/><path d="M27.5 11V26.5H23" stroke="#808080" stroke-width="1" fill="none" shape-rendering="crispEdges"/><path d="M35 7L29 13.5V22" stroke="#fff" stroke-width="1.4" fill="none" /><path d="M29.299999999999955 22L35 28" stroke="#808080" stroke-width="1.4" fill="none" /></svg>
<svg style="left:940px;top:166px" width="40" height="44" viewBox="0 0 40 44"><path d="M3.5 33V3.5H10" stroke="#fff" stroke-width="1" fill="none" shape-rendering="crispEdges"/><path d="M9.5 4V32.5H4" stroke="#808080" stroke-width="1" fill="none" shape-rendering="crispEdges"/><path d="M6 6.5H9" stroke="#808080" stroke-width="1" fill="none" shape-rendering="crispEdges"/><path d="M6 9.5H9" stroke="#808080" stroke-width="1" fill="none" shape-rendering="crispEdges"/><path d="M6 12.5H9" stroke="#808080" stroke-width="1" fill="none" shape-rendering="crispEdges"/><path d="M6 15.5H9" stroke="#808080" stroke-width="1" fill="none" shape-rendering="crispEdges"/><path d="M6 18.5H9" stroke="#808080" stroke-width="1" fill="none" shape-rendering="crispEdges"/><path d="M6 21.5H9" stroke="#808080" stroke-width="1" fill="none" shape-rendering="crispEdges"/><path d="M6 24.5H9" stroke="#808080" stroke-width="1" fill="none" shape-rendering="crispEdges"/><path d="M6 27.5H9" stroke="#808080" stroke-width="1" fill="none" shape-rendering="crispEdges"/><path d="M6 30.5H9" stroke="#808080" stroke-width="1" fill="none" shape-rendering="crispEdges"/><path d="M13.5 32.5V9.5H30.5V32.5z" stroke="#808080" stroke-width="1" fill="none" /><path d="M13.5 9.5L19.5 3.5H36.5L30.5 9.5" stroke="#808080" stroke-width="1" fill="none" /><path d="M36.5 3.5V26.5L30.5 32.5" stroke="#808080" stroke-width="1" fill="none" /><path d="M19.5 4V26.5H36" stroke="#808080" stroke-width="1" fill="none" shape-rendering="crispEdges" stroke-dasharray="1 2"/><path d="M19.5 26.5L13.5 32.5" stroke="#808080" stroke-width="1" fill="none" stroke-dasharray="1 2"/><path d="M13.5 42V35.5H37" stroke="#fff" stroke-width="1" fill="none" shape-rendering="crispEdges"/><path d="M36.5 36V41.5H14" stroke="#808080" stroke-width="1" fill="none" shape-rendering="crispEdges"/><path d="M16.5 37V40" stroke="#808080" stroke-width="1" fill="none" shape-rendering="crispEdges"/><path d="M19.5 37V40" stroke="#808080" stroke-width="1" fill="none" shape-rendering="crispEdges"/><path d="M22.5 37V40" stroke="#808080" stroke-width="1" fill="none" shape-rendering="crispEdges"/><path d="M25.5 37V40" stroke="#808080" stroke-width="1" fill="none" shape-rendering="crispEdges"/><path d="M28.5 37V40" stroke="#808080" stroke-width="1" fill="none" shape-rendering="crispEdges"/><path d="M31.5 37V40" stroke="#808080" stroke-width="1" fill="none" shape-rendering="crispEdges"/><path d="M34.5 37V40" stroke="#808080" stroke-width="1" fill="none" shape-rendering="crispEdges"/></svg>
<div style="left:137px;top:404px;width:502px;height:238px;background:#000;"></div>
<div style="left:138px;top:405px;width:499px;height:235px;background:#c0c0c0;"></div>
<div style="left:140px;top:407px;width:497px;height:233px;background:#808080;"></div>
<svg style="left:171px;top:437px" width="461" height="181" viewBox="0 0 461 181" shape-rendering="crispEdges"><rect x="0" y="0" width="461" height="181" fill="#000"/><path d="M0.5 0V181 M14.5 0V181 M26.5 0V181 M36.5 0V181 M45.5 0V181 M53.5 0V181 M106.5 0V181 M137.5 0V181 M159.5 0V181 M177.5 0V181 M191.5 0V181 M202.5 0V181 M213.5 0V181 M222.5 0V181 M230.5 0V181 M283.5 0V181 M314.5 0V181 M336.5 0V181 M353.5 0V181 M367.5 0V181 M379.5 0V181 M389.5 0V181 M398.5 0V181 M406.5 0V181 M459.5 0V181 M0 10.5H461 M0 20.5H461 M0 30.5H461 M0 40.5H461 M0 50.5H461 M0 60.5H461 M0 70.5H461 M0 80.5H461 M0 90.5H461 M0 100.5H461 M0 110.5H461 M0 120.5H461 M0 130.5H461 M0 140.5H461 M0 150.5H461 M0 160.5H461 M0 170.5H461 M0 180.5H461 M0 0.5H461" stroke="#acacac" stroke-width="1" fill="none"/><g shape-rendering="auto"><polygon points="73.0,36.5 74.0,35.1 75.0,33.7 76.0,32.3 77.0,30.9 78.0,29.5 79.0,28.1 80.0,26.8 81.0,25.4 82.0,24.1 83.0,22.8 84.0,21.6 85.0,20.4 86.0,19.3 87.0,18.2 88.0,17.1 89.0,16.0 90.0,14.9 91.0,13.8 92.0,12.7 93.0,11.4 94.0,10.1 95.0,8.8 96.0,7.7 97.0,6.9 98.0,6.1 99.0,5.5 100.0,5.2 101.0,5.2 102.0,5.2 103.0,5.2 104.0,5.2 105.0,5.2 106.0,5.2 107.0,5.2 108.0,5.5 109.0,6.0 110.0,6.6 111.0,7.1 112.0,7.6 113.0,8.2 114.0,8.7 115.0,9.3 116.0,9.9 117.0,10.5 118.0,11.1 119.0,11.7 120.0,12.2 121.0,12.8 122.0,13.4 123.0,14.0 124.0,14.5 125.0,15.0 126.0,15.5 127.0,16.0 128.0,16.5 129.0,16.9 130.0,17.4 131.0,17.9 132.0,18.3 133.0,18.8 134.0,19.2 135.0,19.7 136.0,20.1 137.0,20.6 138.0,21.0 139.0,21.5 140.0,22.0 141.0,22.4 142.0,22.9 143.0,23.3 144.0,23.8 145.0,24.2 146.0,24.7 147.0,25.1 148.0,25.6 149.0,26.1 150.0,26.6 151.0,27.1 152.0,27.5 153.0,28.1 154.0,28.6 155.0,29.2 156.0,29.7 157.0,30.3 158.0,30.9 159.0,31.5 160.0,32.0 161.0,32.5 162.0,33.0 163.0,33.4 164.0,33.8 165.0,34.2 166.0,34.5 167.0,34.9 168.0,35.2 169.0,35.5 170.0,35.8 171.0,36.1 172.0,36.4 173.0,36.7 174.0,37.0 175.0,37.3 176.0,37.6 177.0,38.0 178.0,38.3 179.0,38.7 180.0,39.1 181.0,39.5 182.0,40.0 183.0,40.4 184.0,40.9 185.0,41.4 186.0,41.8 187.0,42.3 188.0,42.7 189.0,43.1 190.0,43.5 191.0,43.8 192.0,44.1 193.0,44.4 194.0,44.7 195.0,45.0 196.0,45.2 197.0,45.5 198.0,45.7 199.0,46.0 200.0,46.2 201.0,46.4 202.0,46.5 203.0,46.7 204.0,46.8 205.0,46.9 206.0,47.0 207.0,47.1 208.0,47.2 209.0,47.3 210.0,47.4 211.0,47.5 212.0,47.6 213.0,47.7 214.0,47.7 215.0,47.8 216.0,47.9 217.0,48.0 218.0,48.0 219.0,48.1 220.0,48.1 221.0,48.2 222.0,48.3 223.0,48.3 224.0,48.4 225.0,48.4 226.0,48.5 227.0,48.5 228.0,48.6 229.0,48.6 230.0,48.6 231.0,48.7 232.0,48.7 233.0,48.8 234.0,48.8 235.0,48.9 236.0,48.9 237.0,48.9 238.0,49.0 239.0,49.0 240.0,49.0 241.0,49.1 242.0,49.1 243.0,49.1 244.0,49.2 245.0,49.2 246.0,49.2 247.0,49.3 248.0,49.3 249.0,49.3 250.0,49.4 251.0,49.4 252.0,49.4 253.0,49.4 254.0,49.5 255.0,49.5 256.0,49.5 257.0,49.5 258.0,49.6 259.0,49.6 260.0,49.6 261.0,49.7 262.0,49.7 263.0,49.7 264.0,49.7 265.0,49.8 266.0,49.8 267.0,49.8 268.0,49.8 269.0,49.9 270.0,49.9 271.0,49.9 272.0,49.9 273.0,50.0 274.0,50.0 275.0,50.0 276.0,50.0 277.0,50.1 278.0,50.1 279.0,50.1 280.0,50.1 281.0,50.1 282.0,50.2 283.0,50.2 284.0,50.2 285.0,50.2 286.0,50.3 287.0,50.3 288.0,50.3 289.0,50.3 290.0,50.3 291.0,50.4 292.0,50.4 293.0,50.4 294.0,50.4 295.0,50.4 296.0,50.4 297.0,50.5 298.0,50.5 299.0,50.5 299.0,53.0 73.0,53.0" fill="#ff0000"/><polygon points="0.0,36.2 1.0,36.2 2.0,36.2 3.0,36.2 4.0,36.2 5.0,36.2 6.0,36.2 7.0,36.2 8.0,36.2 9.0,36.2 10.0,36.2 11.0,36.2 12.0,36.2 13.0,36.2 14.0,36.2 15.0,36.2 16.0,36.2 17.0,36.2 18.0,36.2 19.0,36.2 20.0,36.2 21.0,36.2 22.0,36.2 23.0,36.2 24.0,36.2 25.0,36.2 26.0,36.2 27.0,36.2 28.0,36.2 29.0,36.2 30.0,36.2 31.0,36.2 32.0,36.2 33.0,36.2 34.0,36.2 35.0,36.2 36.0,36.2 37.0,36.2 38.0,36.2 39.0,36.2 40.0,36.2 41.0,36.2 42.0,36.2 43.0,36.2 44.0,36.2 45.0,36.2 46.0,36.2 47.0,36.2 48.0,36.2 49.0,36.2 50.0,36.2 51.0,36.2 52.0,36.2 53.0,36.2 54.0,36.2 55.0,36.2 56.0,36.2 57.0,36.2 58.0,36.2 59.0,36.2 60.0,36.2 61.0,36.2 62.0,36.2 63.0,36.2 64.0,36.2 65.0,36.2 66.0,36.2 67.0,36.2 68.0,36.2 69.0,36.2 70.0,36.2 71.0,36.2 72.0,36.2 73.0,36.2 74.0,36.2 75.0,36.2 76.0,36.2 77.0,36.2 78.0,36.2 79.0,36.2 80.0,36.2 81.0,36.2 82.0,36.2 83.0,36.2 84.0,36.2 85.0,36.2 86.0,36.2 87.0,36.2 88.0,36.2 89.0,36.2 90.0,36.2 91.0,36.2 92.0,36.2 93.0,36.2 94.0,36.2 95.0,36.2 96.0,36.2 97.0,36.2 98.0,36.2 99.0,36.2 100.0,36.2 101.0,36.2 102.0,36.2 103.0,36.2 104.0,36.3 105.0,36.3 106.0,36.3 107.0,36.4 108.0,36.4 109.0,36.5 110.0,36.5 111.0,36.6 112.0,36.6 113.0,36.7 114.0,36.7 115.0,36.8 116.0,36.8 117.0,36.9 118.0,36.9 119.0,37.0 120.0,37.1 121.0,37.1 122.0,37.2 123.0,37.2 124.0,37.3 125.0,37.3 126.0,37.4 127.0,37.4 128.0,37.5 129.0,37.6 130.0,37.6 131.0,37.7 132.0,37.8 133.0,37.8 134.0,37.9 135.0,38.0 136.0,38.1 137.0,38.2 138.0,38.2 139.0,38.3 140.0,38.4 141.0,38.5 142.0,38.6 143.0,38.7 144.0,38.8 145.0,38.9 146.0,39.1 147.0,39.2 148.0,39.4 149.0,39.5 150.0,39.7 151.0,39.9 152.0,40.1 153.0,40.2 154.0,40.4 155.0,40.6 156.0,40.8 157.0,41.0 158.0,41.1 159.0,41.3 160.0,41.5 161.0,41.6 162.0,41.8 163.0,41.9 164.0,42.1 165.0,42.2 166.0,42.4 167.0,42.5 168.0,42.7 169.0,42.8 170.0,43.0 171.0,43.2 172.0,43.3 173.0,43.5 174.0,43.6 175.0,43.8 176.0,44.0 177.0,44.1 178.0,44.3 179.0,44.5 180.0,44.7 181.0,44.9 182.0,45.1 183.0,45.3 184.0,45.6 185.0,45.8 186.0,46.0 187.0,46.2 188.0,46.5 189.0,46.7 190.0,46.8 191.0,47.0 192.0,47.1 193.0,47.3 194.0,47.4 195.0,47.6 196.0,47.7 197.0,47.8 198.0,47.9 199.0,48.1 200.0,48.2 201.0,48.3 202.0,48.4 203.0,48.4 204.0,48.5 205.0,48.6 206.0,48.6 207.0,48.7 208.0,48.7 209.0,48.8 210.0,48.8 211.0,48.9 212.0,48.9 213.0,49.0 214.0,49.0 215.0,49.1 216.0,49.1 217.0,49.2 218.0,49.2 219.0,49.2 220.0,49.3 221.0,49.3 222.0,49.3 223.0,49.4 224.0,49.4 225.0,49.4 226.0,49.4 227.0,49.5 228.0,49.5 229.0,49.5 230.0,49.5 231.0,49.5 232.0,49.6 233.0,49.6 234.0,49.6 235.0,49.6 236.0,49.6 237.0,49.7 238.0,49.7 239.0,49.7 240.0,49.7 241.0,49.7 242.0,49.8 243.0,49.8 244.0,49.8 245.0,49.8 246.0,49.8 247.0,49.8 248.0,49.9 249.0,49.9 250.0,49.9 251.0,49.9 252.0,49.9 253.0,49.9 254.0,50.0 255.0,50.0 256.0,50.0 257.0,50.0 258.0,50.0 259.0,50.0 260.0,50.0 261.0,50.1 262.0,50.1 263.0,50.1 264.0,50.1 265.0,50.1 266.0,50.1 267.0,50.1 268.0,50.1 269.0,50.1 270.0,50.1 271.0,50.1 272.0,50.2 273.0,50.2 274.0,50.2 275.0,50.2 276.0,50.2 277.0,50.2 278.0,50.2 279.0,50.2 280.0,50.2 281.0,50.2 282.0,50.2 283.0,50.2 284.0,50.2 285.0,50.2 286.0,50.2 287.0,50.2 288.0,50.2 289.0,50.2 290.0,50.2 291.0,50.2 292.0,50.2 293.0,50.2 294.0,50.2 295.0,50.2 296.0,50.2 297.0,50.2 298.0,50.2 299.0,50.2 300.0,50.2 301.0,50.2 302.0,50.2 303.0,50.2 304.0,50.2 305.0,50.2 306.0,50.2 307.0,50.2 308.0,50.2 309.0,50.2 310.0,50.2 311.0,50.2 312.0,50.2 313.0,50.2 314.0,50.2 315.0,50.2 316.0,50.2 317.0,50.2 318.0,50.2 319.0,50.2 320.0,50.2 321.0,50.2 322.0,50.2 323.0,50.2 324.0,50.2 325.0,50.2 326.0,50.2 327.0,50.2 328.0,50.2 329.0,50.2 330.0,50.2 331.0,50.2 332.0,50.2 333.0,50.2 334.0,50.2 335.0,50.2 336.0,50.2 337.0,50.2 338.0,50.2 339.0,50.2 340.0,50.2 341.0,50.2 342.0,50.2 343.0,50.2 344.0,50.2 345.0,50.2 346.0,50.2 347.0,50.2 348.0,50.2 349.0,50.2 350.0,50.2 351.0,50.2 352.0,50.2 353.0,50.2 354.0,50.2 355.0,50.2 356.0,50.2 357.0,50.2 358.0,50.2 359.0,50.2 360.0,50.2 361.0,50.2 362.0,50.2 363.0,50.2 364.0,50.2 365.0,50.2 366.0,50.2 367.0,50.2 368.0,50.2 369.0,50.2 370.0,50.2 371.0,50.2 372.0,50.2 373.0,50.2 374.0,50.2 375.0,50.2 376.0,50.2 377.0,50.2 378.0,50.2 379.0,50.2 380.0,50.2 381.0,50.2 382.0,50.2 383.0,50.2 384.0,50.2 385.0,50.2 386.0,50.2 387.0,50.2 388.0,50.2 389.0,50.2 390.0,50.2 391.0,50.2 392.0,50.2 393.0,50.2 394.0,50.2 395.0,50.2 396.0,50.2 397.0,50.2 398.0,50.2 399.0,50.2 400.0,50.2 401.0,50.2 402.0,50.2 403.0,50.2 404.0,50.2 405.0,50.2 406.0,50.2 407.0,50.2 408.0,50.2 409.0,50.2 410.0,50.2 411.0,50.2 412.0,50.2 413.0,50.2 414.0,50.2 415.0,50.2 416.0,50.2 417.0,50.2 418.0,50.2 419.0,50.2 420.0,50.2 421.0,50.2 422.0,50.2 423.0,50.2 424.0,50.2 425.0,50.2 426.0,50.2 427.0,50.2 428.0,50.2 429.0,50.2 430.0,50.2 431.0,50.2 432.0,50.2 433.0,50.2 434.0,50.2 435.0,50.2 436.0,50.2 437.0,50.2 438.0,50.2 439.0,50.2 440.0,50.2 441.0,50.2 442.0,50.2 443.0,50.2 444.0,50.2 445.0,50.2 446.0,50.2 447.0,50.2 448.0,50.2 449.0,50.2 450.0,50.2 451.0,50.2 452.0,50.2 453.0,50.2 454.0,50.2 455.0,50.2 456.0,50.2 457.0,50.2 458.0,50.2 459.0,50.2 460.0,50.2 461.0,50.2 461.0,181.0 0.0,181.0" fill="#ffff00"/></g></svg>
<div style="left:170px;top:436px;width:2px;height:182px;background:#d0d0d0;"></div>
<div style="left:170px;top:436px;width:462px;height:2px;background:#d0d0d0;"></div>
<div style="left:171px;top:618px;width:1px;height:4px;background:#e8e8e8;"></div>
<div style="left:185px;top:618px;width:1px;height:4px;background:#e8e8e8;"></div>
<div style="left:197px;top:618px;width:1px;height:4px;background:#e8e8e8;"></div>
<div style="left:207px;top:618px;width:1px;height:4px;background:#e8e8e8;"></div>
<div style="left:216px;top:618px;width:1px;height:4px;background:#e8e8e8;"></div>
<div style="left:224px;top:618px;width:1px;height:4px;background:#e8e8e8;"></div>
<div style="left:277px;top:618px;width:1px;height:4px;background:#e8e8e8;"></div>
<div style="left:308px;top:618px;width:1px;height:4px;background:#e8e8e8;"></div>
<div style="left:330px;top:618px;width:1px;height:4px;background:#e8e8e8;"></div>
<div style="left:348px;top:618px;width:1px;height:4px;background:#e8e8e8;"></div>
<div style="left:362px;top:618px;width:1px;height:4px;background:#e8e8e8;"></div>
<div style="left:373px;top:618px;width:1px;height:4px;background:#e8e8e8;"></div>
<div style="left:384px;top:618px;width:1px;height:4px;background:#e8e8e8;"></div>
<div style="left:393px;top:618px;width:1px;height:4px;background:#e8e8e8;"></div>
<div style="left:401px;top:618px;width:1px;height:4px;background:#e8e8e8;"></div>
<div style="left:454px;top:618px;width:1px;height:4px;background:#e8e8e8;"></div>
<div style="left:485px;top:618px;width:1px;height:4px;background:#e8e8e8;"></div>
<div style="left:507px;top:618px;width:1px;height:4px;background:#e8e8e8;"></div>
<div style="left:524px;top:618px;width:1px;height:4px;background:#e8e8e8;"></div>
<div style="left:538px;top:618px;width:1px;height:4px;background:#e8e8e8;"></div>
<div style="left:550px;top:618px;width:1px;height:4px;background:#e8e8e8;"></div>
<div style="left:560px;top:618px;width:1px;height:4px;background:#e8e8e8;"></div>
<div style="left:569px;top:618px;width:1px;height:4px;background:#e8e8e8;"></div>
<div style="left:577px;top:618px;width:1px;height:4px;background:#e8e8e8;"></div>
<div style="left:630px;top:618px;width:1px;height:4px;background:#e8e8e8;"></div>
<div style="left:167px;top:447px;width:3px;height:1px;background:#e8e8e8;"></div>
<div style="left:633px;top:447px;width:3px;height:1px;background:#e8e8e8;"></div>
<div class="ax" style="left:131px;top:440px;width:34px;height:16px;line-height:16px;text-align:right;">dB</div>
<div style="left:167px;top:467px;width:3px;height:1px;background:#e8e8e8;"></div>
<div style="left:633px;top:467px;width:3px;height:1px;background:#e8e8e8;"></div>
<div class="ax" style="left:131px;top:460px;width:34px;height:16px;line-height:16px;text-align:right;">94</div>
<div style="left:167px;top:487px;width:3px;height:1px;background:#e8e8e8;"></div>
<div style="left:633px;top:487px;width:3px;height:1px;background:#e8e8e8;"></div>
<div class="ax" style="left:131px;top:480px;width:34px;height:16px;line-height:16px;text-align:right;">88</div>
<div style="left:167px;top:507px;width:3px;height:1px;background:#e8e8e8;"></div>
<div style="left:633px;top:507px;width:3px;height:1px;background:#e8e8e8;"></div>
<div class="ax" style="left:131px;top:500px;width:34px;height:16px;line-height:16px;text-align:right;">82</div>
<div style="left:167px;top:527px;width:3px;height:1px;background:#e8e8e8;"></div>
<div style="left:633px;top:527px;width:3px;height:1px;background:#e8e8e8;"></div>
<div class="ax" style="left:131px;top:520px;width:34px;height:16px;line-height:16px;text-align:right;">76</div>
<div style="left:167px;top:547px;width:3px;height:1px;background:#e8e8e8;"></div>
<div style="left:633px;top:547px;width:3px;height:1px;background:#e8e8e8;"></div>
<div class="ax" style="left:131px;top:540px;width:34px;height:16px;line-height:16px;text-align:right;">70</div>
<div style="left:167px;top:567px;width:3px;height:1px;background:#e8e8e8;"></div>
<div style="left:633px;top:567px;width:3px;height:1px;background:#e8e8e8;"></div>
<div class="ax" style="left:131px;top:560px;width:34px;height:16px;line-height:16px;text-align:right;">64</div>
<div style="left:167px;top:587px;width:3px;height:1px;background:#e8e8e8;"></div>
<div style="left:633px;top:587px;width:3px;height:1px;background:#e8e8e8;"></div>
<div class="ax" style="left:131px;top:580px;width:34px;height:16px;line-height:16px;text-align:right;">58</div>
<div style="left:167px;top:607px;width:3px;height:1px;background:#e8e8e8;"></div>
<div style="left:633px;top:607px;width:3px;height:1px;background:#e8e8e8;"></div>
<div class="ax" style="left:131px;top:600px;width:34px;height:16px;line-height:16px;text-align:right;">52</div>
<div class="ax" style="left:203.5px;top:623px;width:41px;height:16px;line-height:16px;text-align:center;">10</div>
<div class="ax" style="left:327.5px;top:623px;width:41px;height:16px;line-height:16px;text-align:center;">50</div>
<div class="ax" style="left:380.5px;top:623px;width:41px;height:16px;line-height:16px;text-align:center;">100</div>
<div class="ax" style="left:503.5px;top:623px;width:41px;height:16px;line-height:16px;text-align:center;">500</div>
<div class="ax" style="left:556.5px;top:623px;width:41px;height:16px;line-height:16px;text-align:center;">1000</div>
<div class="ax" style="left:168px;top:623px;width:40px;height:16px;line-height:16px;text-align:left;">5 Hz</div>
<div class="ax" style="left:594px;top:623px;width:40px;height:16px;line-height:16px;text-align:right;">2000</div>
<div class="gt" style="left:187px;top:414px;width:400px;height:16px;line-height:16px;text-align:center;letter-spacing:-0.15px;">Amplitude Response w/ 2.83V Input (dBSPL/Hz)</div>
<div style="left:144px;top:412px;width:38px;height:16px;background:#000;"></div>
<div style="left:145px;top:413px;width:36px;height:14px;background:#716f64;"></div>
<div style="left:145px;top:413px;width:35px;height:13px;background:#fff;"></div>
<div style="left:146px;top:414px;width:34px;height:12px;background:#aca899;"></div>
<div style="left:146px;top:414px;width:33px;height:11px;background:#ece9d8;"></div>
<div class="t" style="left:145px;top:412px;width:35px;height:14px;line-height:14px;text-align:center;font-size:11px;letter-spacing:-0.5px;letter-spacing:-0.5px;">Clear</div>
<div style="left:185px;top:412px;width:42px;height:16px;background:#716f64;"></div>
<div style="left:185px;top:412px;width:41px;height:15px;background:#fff;"></div>
<div style="left:186px;top:413px;width:40px;height:14px;background:#aca899;"></div>
<div style="left:186px;top:413px;width:39px;height:13px;background:#ece9d8;"></div>
<div class="t" style="left:185px;top:411px;width:41px;height:16px;line-height:16px;text-align:center;font-size:11px;letter-spacing:-0.5px;letter-spacing:-0.3px;">Cursor</div>
<svg style="left:593px;top:415px" width="23" height="13" viewBox="0 0 23 13"><path d="M1 9.5v-3l5.500-1.200 2.500-3.300h6.500l2.500 3.300 3.500 1v3.200z" fill="#e4e4e4" stroke="#f4f4f4" stroke-width=".8"/><path d="M9.500 3.200h5l1.500 2.300h-8z" fill="#9a9a9a"/><path d="M1 9.800h20" stroke="#808080" stroke-width=".8"/><circle cx="5.500" cy="10.300" r="1.700" fill="#101010"/><circle cx="16.500" cy="10.300" r="1.700" fill="#101010"/></svg>
<div style="left:618px;top:415px;width:13px;height:13px;background:#fff;"></div>
<div style="left:618px;top:415px;width:12px;height:12px;background:#606060;"></div>
<div style="left:619px;top:416px;width:12px;height:12px;background:#fff;"></div>
<svg style="left:619px;top:416px" width="12" height="12" viewBox="0 0 12 12"><path d="M2.500 5.500l2.500 2.800L9.500 3" stroke="#000" stroke-width="2" fill="none"/></svg>
<div style="left:641px;top:404px;width:502px;height:238px;background:#000;"></div>
<div style="left:642px;top:405px;width:499px;height:235px;background:#c0c0c0;"></div>
<div style="left:644px;top:407px;width:497px;height:233px;background:#808080;"></div>
<svg style="left:675px;top:437px" width="461" height="181" viewBox="0 0 461 181" shape-rendering="crispEdges"><rect x="0" y="0" width="461" height="181" fill="#000"/><path d="M0.5 0V181 M14.5 0V181 M26.5 0V181 M36.5 0V181 M45.5 0V181 M53.5 0V181 M106.5 0V181 M137.5 0V181 M159.5 0V181 M177.5 0V181 M191.5 0V181 M202.5 0V181 M213.5 0V181 M222.5 0V181 M230.5 0V181 M283.5 0V181 M314.5 0V181 M336.5 0V181 M353.5 0V181 M367.5 0V181 M379.5 0V181 M389.5 0V181 M398.5 0V181 M406.5 0V181 M459.5 0V181 M0 4.5H461 M0 20.5H461 M0 36.5H461 M0 52.5H461 M0 68.5H461 M0 84.5H461 M0 100.5H461 M0 116.5H461 M0 132.5H461 M0 148.5H461 M0 164.5H461 M0 180.5H461 M0 0.5H461" stroke="#acacac" stroke-width="1" fill="none"/><g shape-rendering="auto"><polygon points="0.0,167.0 1.0,167.0 2.0,166.9 3.0,166.9 4.0,166.9 5.0,166.9 6.0,166.8 7.0,166.8 8.0,166.8 9.0,166.7 10.0,166.7 11.0,166.6 12.0,166.6 13.0,166.6 14.0,166.5 15.0,166.5 16.0,166.4 17.0,166.4 18.0,166.3 19.0,166.3 20.0,166.2 21.0,166.2 22.0,166.2 23.0,166.1 24.0,166.1 25.0,166.0 26.0,165.9 27.0,165.9 28.0,165.8 29.0,165.8 30.0,165.7 31.0,165.7 32.0,165.6 33.0,165.6 34.0,165.5 35.0,165.5 36.0,165.4 37.0,165.3 38.0,165.3 39.0,165.2 40.0,165.1 41.0,165.1 42.0,165.0 43.0,164.9 44.0,164.8 45.0,164.8 46.0,164.7 47.0,164.6 48.0,164.5 49.0,164.4 50.0,164.3 51.0,164.2 52.0,164.1 53.0,164.0 54.0,163.9 55.0,163.8 56.0,163.6 57.0,163.5 58.0,163.3 59.0,163.2 60.0,163.0 61.0,162.8 62.0,162.6 63.0,162.4 64.0,162.1 65.0,161.9 66.0,161.7 67.0,161.4 68.0,161.1 69.0,160.8 70.0,160.5 71.0,160.2 72.0,159.8 73.0,159.4 74.0,158.9 75.0,158.4 76.0,157.8 77.0,157.1 78.0,156.4 79.0,155.7 80.0,154.9 81.0,154.0 82.0,152.9 83.0,151.4 84.0,149.7 85.0,147.8 86.0,145.9 87.0,143.9 88.0,142.0 89.0,139.9 90.0,138.0 91.0,136.4 92.0,135.5 93.0,136.6 94.0,139.0 95.0,143.0 96.0,146.7 97.0,150.3 98.0,153.4 99.0,156.0 100.0,158.2 101.0,160.2 102.0,161.5 103.0,162.0 104.0,162.2 105.0,162.5 106.0,162.7 107.0,162.8 108.0,162.9 109.0,163.0 110.0,163.0 110.0,173.0 0.0,173.0" fill="#ff0000"/><polygon points="0.0,168.0 1.0,168.0 2.0,168.0 3.0,168.0 4.0,168.0 5.0,168.0 6.0,168.0 7.0,168.0 8.0,168.0 9.0,168.0 10.0,167.9 11.0,167.9 12.0,167.9 13.0,167.9 14.0,167.9 15.0,167.9 16.0,167.9 17.0,167.8 18.0,167.8 19.0,167.8 20.0,167.8 21.0,167.8 22.0,167.8 23.0,167.7 24.0,167.7 25.0,167.7 26.0,167.7 27.0,167.6 28.0,167.6 29.0,167.6 30.0,167.6 31.0,167.5 32.0,167.5 33.0,167.5 34.0,167.4 35.0,167.4 36.0,167.4 37.0,167.4 38.0,167.3 39.0,167.3 40.0,167.3 41.0,167.2 42.0,167.2 43.0,167.2 44.0,167.1 45.0,167.1 46.0,167.1 47.0,167.0 48.0,167.0 49.0,166.9 50.0,166.9 51.0,166.9 52.0,166.8 53.0,166.8 54.0,166.8 55.0,166.7 56.0,166.7 57.0,166.6 58.0,166.5 59.0,166.5 60.0,166.4 61.0,166.3 62.0,166.3 63.0,166.2 64.0,166.1 65.0,166.0 66.0,165.9 67.0,165.8 68.0,165.7 69.0,165.6 70.0,165.5 71.0,165.4 72.0,165.3 73.0,165.2 74.0,165.1 75.0,165.0 76.0,164.9 77.0,164.8 78.0,164.7 79.0,164.6 80.0,164.5 81.0,164.4 82.0,164.3 83.0,164.2 84.0,164.1 85.0,164.0 86.0,163.9 87.0,163.8 88.0,163.7 89.0,163.6 90.0,163.5 91.0,163.5 92.0,163.4 93.0,163.3 94.0,163.2 95.0,163.1 96.0,163.0 97.0,162.9 98.0,162.8 99.0,162.7 100.0,162.6 101.0,162.5 102.0,162.3 103.0,162.2 104.0,162.1 105.0,161.9 106.0,161.8 107.0,161.6 108.0,161.5 109.0,161.3 110.0,161.1 111.0,160.9 112.0,160.7 113.0,160.4 114.0,160.2 115.0,159.9 116.0,159.6 117.0,159.4 118.0,159.1 119.0,158.8 120.0,158.5 121.0,158.2 122.0,157.8 123.0,157.5 124.0,157.1 125.0,156.8 126.0,156.4 127.0,156.1 128.0,155.7 129.0,155.3 130.0,154.9 131.0,154.4 132.0,153.9 133.0,153.4 134.0,152.8 135.0,152.2 136.0,151.6 137.0,150.9 138.0,150.1 139.0,149.2 140.0,148.2 141.0,147.1 142.0,145.8 143.0,144.3 144.0,142.5 145.0,140.5 146.0,137.7 147.0,133.7 148.0,128.8 149.0,123.5 150.0,118.0 151.0,112.1 152.0,105.3 153.0,98.1 154.0,90.6 155.0,83.0 156.0,75.1 157.0,67.0 158.0,58.3 159.0,49.7 160.0,51.8 161.0,60.5 162.0,68.3 163.0,76.3 164.0,84.8 165.0,94.9 166.0,105.5 167.0,114.6 168.0,120.8 169.0,125.7 170.0,129.9 171.0,133.5 172.0,136.6 173.0,139.3 174.0,141.8 175.0,144.0 176.0,145.9 177.0,147.4 178.0,148.5 179.0,149.5 180.0,150.4 181.0,151.3 182.0,152.1 183.0,152.8 184.0,153.4 185.0,154.1 186.0,154.6 187.0,155.1 188.0,155.6 189.0,156.0 190.0,156.4 191.0,156.8 192.0,157.1 193.0,157.5 194.0,157.8 195.0,158.1 196.0,158.4 197.0,158.7 198.0,158.9 199.0,159.2 200.0,159.4 201.0,159.7 202.0,159.9 203.0,160.1 204.0,160.3 205.0,160.5 206.0,160.7 207.0,160.9 208.0,161.1 209.0,161.2 210.0,161.4 211.0,161.6 212.0,161.7 213.0,161.9 214.0,162.0 215.0,162.2 216.0,162.3 217.0,162.5 218.0,162.6 219.0,162.7 220.0,162.9 221.0,163.0 222.0,163.1 223.0,163.2 224.0,163.3 225.0,163.4 226.0,163.5 227.0,163.6 228.0,163.7 229.0,163.8 230.0,163.9 231.0,164.0 232.0,164.0 233.0,164.1 234.0,164.2 235.0,164.3 236.0,164.3 237.0,164.4 238.0,164.5 239.0,164.5 240.0,164.6 241.0,164.7 242.0,164.7 243.0,164.8 244.0,164.9 245.0,164.9 246.0,165.0 247.0,165.1 248.0,165.1 249.0,165.2 250.0,165.2 251.0,165.3 252.0,165.4 253.0,165.4 254.0,165.5 255.0,165.5 256.0,165.6 257.0,165.6 258.0,165.7 259.0,165.7 260.0,165.8 261.0,165.8 262.0,165.9 263.0,165.9 264.0,166.0 265.0,166.0 266.0,166.1 267.0,166.1 268.0,166.2 269.0,166.2 270.0,166.2 271.0,166.3 272.0,166.3 273.0,166.4 274.0,166.4 275.0,166.5 276.0,166.5 277.0,166.5 278.0,166.6 279.0,166.6 280.0,166.7 281.0,166.7 282.0,166.7 283.0,166.8 284.0,166.8 285.0,166.8 286.0,166.9 287.0,166.9 288.0,167.0 289.0,167.0 290.0,167.0 291.0,167.1 292.0,167.1 293.0,167.2 294.0,167.2 295.0,167.2 296.0,167.3 297.0,167.3 298.0,167.4 299.0,167.4 300.0,167.4 301.0,167.5 302.0,167.5 303.0,167.6 304.0,167.6 305.0,167.6 306.0,167.7 307.0,167.7 308.0,167.7 309.0,167.8 310.0,167.8 311.0,167.8 312.0,167.9 313.0,167.9 314.0,167.9 315.0,168.0 316.0,168.0 317.0,168.0 318.0,168.1 319.0,168.1 320.0,168.1 321.0,168.1 322.0,168.2 323.0,168.2 324.0,168.2 325.0,168.2 326.0,168.2 327.0,168.2 328.0,168.3 329.0,168.3 330.0,168.3 331.0,168.3 332.0,168.3 333.0,168.3 334.0,168.3 335.0,168.3 336.0,168.3 337.0,168.3 338.0,168.3 339.0,168.3 340.0,168.3 341.0,168.3 342.0,168.3 343.0,168.3 344.0,168.3 345.0,168.3 346.0,168.3 347.0,168.3 348.0,168.3 349.0,168.3 350.0,168.3 351.0,168.3 352.0,168.3 353.0,168.3 354.0,168.3 355.0,168.3 356.0,168.3 357.0,168.3 358.0,168.3 359.0,168.3 360.0,168.3 361.0,168.3 362.0,168.3 363.0,168.3 364.0,168.3 365.0,168.3 366.0,168.3 367.0,168.3 368.0,168.3 369.0,168.3 370.0,168.3 371.0,168.3 372.0,168.3 373.0,168.3 374.0,168.3 375.0,168.3 376.0,168.3 377.0,168.3 378.0,168.3 379.0,168.3 380.0,168.3 381.0,168.3 382.0,168.3 383.0,168.3 384.0,168.3 385.0,168.3 386.0,168.3 387.0,168.3 388.0,168.3 389.0,168.3 390.0,168.3 391.0,168.3 392.0,168.3 393.0,168.2 394.0,168.2 395.0,168.2 396.0,168.1 397.0,168.1 398.0,168.1 399.0,168.0 400.0,168.0 401.0,167.9 402.0,167.8 403.0,167.8 404.0,167.7 405.0,167.7 406.0,167.6 407.0,167.5 408.0,167.4 409.0,167.4 410.0,167.3 411.0,167.2 412.0,167.1 413.0,167.0 414.0,167.0 415.0,166.9 416.0,166.8 417.0,166.7 418.0,166.6 419.0,166.5 420.0,166.4 421.0,166.3 422.0,166.3 423.0,166.2 424.0,166.1 425.0,166.0 426.0,165.9 427.0,165.8 428.0,165.7 429.0,165.6 430.0,165.5 431.0,165.4 432.0,165.3 433.0,165.1 434.0,165.0 435.0,164.9 436.0,164.8 437.0,164.6 438.0,164.5 439.0,164.3 440.0,164.2 441.0,164.1 442.0,163.9 443.0,163.8 444.0,163.6 445.0,163.5 446.0,163.4 447.0,163.2 448.0,163.1 449.0,162.9 450.0,162.8 451.0,162.6 452.0,162.5 453.0,162.3 454.0,162.2 455.0,162.0 456.0,161.8 457.0,161.7 458.0,161.5 459.0,161.3 460.0,161.2 461.0,161.0 461.0,181.0 0.0,181.0" fill="#ffff00"/></g></svg>
<div style="left:674px;top:436px;width:2px;height:182px;background:#d0d0d0;"></div>
<div style="left:674px;top:436px;width:462px;height:2px;background:#d0d0d0;"></div>
<div style="left:675px;top:618px;width:1px;height:4px;background:#e8e8e8;"></div>
<div style="left:689px;top:618px;width:1px;height:4px;background:#e8e8e8;"></div>
<div style="left:701px;top:618px;width:1px;height:4px;background:#e8e8e8;"></div>
<div style="left:711px;top:618px;width:1px;height:4px;background:#e8e8e8;"></div>
<div style="left:720px;top:618px;width:1px;height:4px;background:#e8e8e8;"></div>
<div style="left:728px;top:618px;width:1px;height:4px;background:#e8e8e8;"></div>
<div style="left:781px;top:618px;width:1px;height:4px;background:#e8e8e8;"></div>
<div style="left:812px;top:618px;width:1px;height:4px;background:#e8e8e8;"></div>
<div style="left:834px;top:618px;width:1px;height:4px;background:#e8e8e8;"></div>
<div style="left:852px;top:618px;width:1px;height:4px;background:#e8e8e8;"></div>
<div style="left:866px;top:618px;width:1px;height:4px;background:#e8e8e8;"></div>
<div style="left:877px;top:618px;width:1px;height:4px;background:#e8e8e8;"></div>
<div style="left:888px;top:618px;width:1px;height:4px;background:#e8e8e8;"></div>
<div style="left:897px;top:618px;width:1px;height:4px;background:#e8e8e8;"></div>
<div style="left:905px;top:618px;width:1px;height:4px;background:#e8e8e8;"></div>
<div style="left:958px;top:618px;width:1px;height:4px;background:#e8e8e8;"></div>
<div style="left:989px;top:618px;width:1px;height:4px;background:#e8e8e8;"></div>
<div style="left:1011px;top:618px;width:1px;height:4px;background:#e8e8e8;"></div>
<div style="left:1028px;top:618px;width:1px;height:4px;background:#e8e8e8;"></div>
<div style="left:1042px;top:618px;width:1px;height:4px;background:#e8e8e8;"></div>
<div style="left:1054px;top:618px;width:1px;height:4px;background:#e8e8e8;"></div>
<div style="left:1064px;top:618px;width:1px;height:4px;background:#e8e8e8;"></div>
<div style="left:1073px;top:618px;width:1px;height:4px;background:#e8e8e8;"></div>
<div style="left:1081px;top:618px;width:1px;height:4px;background:#e8e8e8;"></div>
<div style="left:1134px;top:618px;width:1px;height:4px;background:#e8e8e8;"></div>
<div style="left:671px;top:441px;width:3px;height:1px;background:#e8e8e8;"></div>
<div style="left:1137px;top:441px;width:3px;height:1px;background:#e8e8e8;"></div>
<div class="ax" style="left:635px;top:434px;width:34px;height:16px;line-height:16px;text-align:right;font-weight:bold;">Ω</div>
<div style="left:671px;top:457px;width:3px;height:1px;background:#e8e8e8;"></div>
<div style="left:1137px;top:457px;width:3px;height:1px;background:#e8e8e8;"></div>
<div class="ax" style="left:635px;top:450px;width:34px;height:16px;line-height:16px;text-align:right;">100</div>
<div style="left:671px;top:473px;width:3px;height:1px;background:#e8e8e8;"></div>
<div style="left:1137px;top:473px;width:3px;height:1px;background:#e8e8e8;"></div>
<div class="ax" style="left:635px;top:466px;width:34px;height:16px;line-height:16px;text-align:right;">90</div>
<div style="left:671px;top:489px;width:3px;height:1px;background:#e8e8e8;"></div>
<div style="left:1137px;top:489px;width:3px;height:1px;background:#e8e8e8;"></div>
<div class="ax" style="left:635px;top:482px;width:34px;height:16px;line-height:16px;text-align:right;">80</div>
<div style="left:671px;top:505px;width:3px;height:1px;background:#e8e8e8;"></div>
<div style="left:1137px;top:505px;width:3px;height:1px;background:#e8e8e8;"></div>
<div class="ax" style="left:635px;top:498px;width:34px;height:16px;line-height:16px;text-align:right;">70</div>
<div style="left:671px;top:521px;width:3px;height:1px;background:#e8e8e8;"></div>
<div style="left:1137px;top:521px;width:3px;height:1px;background:#e8e8e8;"></div>
<div class="ax" style="left:635px;top:514px;width:34px;height:16px;line-height:16px;text-align:right;">60</div>
<div style="left:671px;top:537px;width:3px;height:1px;background:#e8e8e8;"></div>
<div style="left:1137px;top:537px;width:3px;height:1px;background:#e8e8e8;"></div>
<div class="ax" style="left:635px;top:530px;width:34px;height:16px;line-height:16px;text-align:right;">50</div>
<div style="left:671px;top:553px;width:3px;height:1px;background:#e8e8e8;"></div>
<div style="left:1137px;top:553px;width:3px;height:1px;background:#e8e8e8;"></div>
<div class="ax" style="left:635px;top:546px;width:34px;height:16px;line-height:16px;text-align:right;">40</div>
<div style="left:671px;top:569px;width:3px;height:1px;background:#e8e8e8;"></div>
<div style="left:1137px;top:569px;width:3px;height:1px;background:#e8e8e8;"></div>
<div class="ax" style="left:635px;top:562px;width:34px;height:16px;line-height:16px;text-align:right;">30</div>
<div style="left:671px;top:585px;width:3px;height:1px;background:#e8e8e8;"></div>
<div style="left:1137px;top:585px;width:3px;height:1px;background:#e8e8e8;"></div>
<div class="ax" style="left:635px;top:578px;width:34px;height:16px;line-height:16px;text-align:right;">20</div>
<div style="left:671px;top:601px;width:3px;height:1px;background:#e8e8e8;"></div>
<div style="left:1137px;top:601px;width:3px;height:1px;background:#e8e8e8;"></div>
<div class="ax" style="left:635px;top:594px;width:34px;height:16px;line-height:16px;text-align:right;">10</div>
<div style="left:671px;top:617px;width:3px;height:1px;background:#e8e8e8;"></div>
<div style="left:1137px;top:617px;width:3px;height:1px;background:#e8e8e8;"></div>
<div class="ax" style="left:635px;top:610px;width:34px;height:16px;line-height:16px;text-align:right;">0</div>
<div class="ax" style="left:707.5px;top:623px;width:41px;height:16px;line-height:16px;text-align:center;">10</div>
<div class="ax" style="left:831.5px;top:623px;width:41px;height:16px;line-height:16px;text-align:center;">50</div>
<div class="ax" style="left:884.5px;top:623px;width:41px;height:16px;line-height:16px;text-align:center;">100</div>
<div class="ax" style="left:1007.5px;top:623px;width:41px;height:16px;line-height:16px;text-align:center;">500</div>
<div class="ax" style="left:1060.5px;top:623px;width:41px;height:16px;line-height:16px;text-align:center;">1000</div>
<div class="ax" style="left:672px;top:623px;width:40px;height:16px;line-height:16px;text-align:left;">5 Hz</div>
<div class="ax" style="left:1098px;top:623px;width:40px;height:16px;line-height:16px;text-align:right;">2000</div>
<div class="gt" style="left:692px;top:414px;width:400px;height:16px;line-height:16px;text-align:center;letter-spacing:-0.15px;">Impedance Response (Ohms/Hz)</div>
<div style="left:648px;top:412px;width:38px;height:16px;background:#000;"></div>
<div style="left:649px;top:413px;width:36px;height:14px;background:#716f64;"></div>
<div style="left:649px;top:413px;width:35px;height:13px;background:#fff;"></div>
<div style="left:650px;top:414px;width:34px;height:12px;background:#aca899;"></div>
<div style="left:650px;top:414px;width:33px;height:11px;background:#ece9d8;"></div>
<div class="t" style="left:649px;top:412px;width:35px;height:14px;line-height:14px;text-align:center;font-size:11px;letter-spacing:-0.5px;letter-spacing:-0.5px;">Clear</div>
<div style="left:689px;top:412px;width:42px;height:16px;background:#716f64;"></div>
<div style="left:689px;top:412px;width:41px;height:15px;background:#fff;"></div>
<div style="left:690px;top:413px;width:40px;height:14px;background:#aca899;"></div>
<div style="left:690px;top:413px;width:39px;height:13px;background:#ece9d8;"></div>
<div class="t" style="left:689px;top:411px;width:41px;height:16px;line-height:16px;text-align:center;font-size:11px;letter-spacing:-0.5px;letter-spacing:-0.3px;">Cursor</div>
<div class="t" style="left:1000px;top:408px;width:135px;height:14px;line-height:14px;text-align:right;color:#ffff00;font-size:11px;">Max Z: 82, ohms</div>
<div class="t" style="left:1000px;top:421px;width:135px;height:14px;line-height:14px;text-align:right;color:#ffff00;font-size:11px;">Min Z: 7,2 ohms</div>
<div style="left:137px;top:642px;width:502px;height:238px;background:#000;"></div>
<div style="left:138px;top:643px;width:499px;height:235px;background:#c0c0c0;"></div>
<div style="left:140px;top:645px;width:497px;height:233px;background:#808080;"></div>
<svg style="left:171px;top:675px" width="461" height="181" viewBox="0 0 461 181" shape-rendering="crispEdges"><rect x="0" y="0" width="461" height="181" fill="#000"/><path d="M0.5 0V181 M14.5 0V181 M26.5 0V181 M36.5 0V181 M45.5 0V181 M53.5 0V181 M106.5 0V181 M137.5 0V181 M159.5 0V181 M177.5 0V181 M191.5 0V181 M202.5 0V181 M213.5 0V181 M222.5 0V181 M230.5 0V181 M283.5 0V181 M314.5 0V181 M336.5 0V181 M353.5 0V181 M367.5 0V181 M379.5 0V181 M389.5 0V181 M398.5 0V181 M406.5 0V181 M459.5 0V181 M0 10.5H461 M0 20.5H461 M0 30.5H461 M0 40.5H461 M0 50.5H461 M0 60.5H461 M0 70.5H461 M0 80.5H461 M0 90.5H461 M0 100.5H461 M0 110.5H461 M0 120.5H461 M0 130.5H461 M0 140.5H461 M0 150.5H461 M0 160.5H461 M0 170.5H461 M0 180.5H461 M0 0.5H461" stroke="#acacac" stroke-width="1" fill="none"/><g shape-rendering="auto"><polygon points="26.5,181.0 62.5,117.0 94.3,50.5 144.0,50.5 144.0,181.0" fill="#ff0000"/><polygon points="53.0,181.0 93.4,117.0 140.5,50.5 461.0,50.5 461.0,181.0" fill="#ffff00"/></g><path d="M0 50.5H461" stroke="#ffff00" stroke-width="1" stroke-dasharray="1 1" fill="none"/><path d="M95 50.5H141" stroke="#fff" stroke-width="1" stroke-dasharray="3 3" fill="none"/></svg>
<div style="left:170px;top:674px;width:2px;height:182px;background:#d0d0d0;"></div>
<div style="left:170px;top:674px;width:462px;height:2px;background:#d0d0d0;"></div>
<div style="left:171px;top:856px;width:1px;height:4px;background:#e8e8e8;"></div>
<div style="left:185px;top:856px;width:1px;height:4px;background:#e8e8e8;"></div>
<div style="left:197px;top:856px;width:1px;height:4px;background:#e8e8e8;"></div>
<div style="left:207px;top:856px;width:1px;height:4px;background:#e8e8e8;"></div>
<div style="left:216px;top:856px;width:1px;height:4px;background:#e8e8e8;"></div>
<div style="left:224px;top:856px;width:1px;height:4px;background:#e8e8e8;"></div>
<div style="left:277px;top:856px;width:1px;height:4px;background:#e8e8e8;"></div>
<div style="left:308px;top:856px;width:1px;height:4px;background:#e8e8e8;"></div>
<div style="left:330px;top:856px;width:1px;height:4px;background:#e8e8e8;"></div>
<div style="left:348px;top:856px;width:1px;height:4px;background:#e8e8e8;"></div>
<div style="left:362px;top:856px;width:1px;height:4px;background:#e8e8e8;"></div>
<div style="left:373px;top:856px;width:1px;height:4px;background:#e8e8e8;"></div>
<div style="left:384px;top:856px;width:1px;height:4px;background:#e8e8e8;"></div>
<div style="left:393px;top:856px;width:1px;height:4px;background:#e8e8e8;"></div>
<div style="left:401px;top:856px;width:1px;height:4px;background:#e8e8e8;"></div>
<div style="left:454px;top:856px;width:1px;height:4px;background:#e8e8e8;"></div>
<div style="left:485px;top:856px;width:1px;height:4px;background:#e8e8e8;"></div>
<div style="left:507px;top:856px;width:1px;height:4px;background:#e8e8e8;"></div>
<div style="left:524px;top:856px;width:1px;height:4px;background:#e8e8e8;"></div>
<div style="left:538px;top:856px;width:1px;height:4px;background:#e8e8e8;"></div>
<div style="left:550px;top:856px;width:1px;height:4px;background:#e8e8e8;"></div>
<div style="left:560px;top:856px;width:1px;height:4px;background:#e8e8e8;"></div>
<div style="left:569px;top:856px;width:1px;height:4px;background:#e8e8e8;"></div>
<div style="left:577px;top:856px;width:1px;height:4px;background:#e8e8e8;"></div>
<div style="left:630px;top:856px;width:1px;height:4px;background:#e8e8e8;"></div>
<div style="left:167px;top:685px;width:3px;height:1px;background:#e8e8e8;"></div>
<div style="left:633px;top:685px;width:3px;height:1px;background:#e8e8e8;"></div>
<div class="ax" style="left:131px;top:678px;width:34px;height:16px;line-height:16px;text-align:right;">dB</div>
<div style="left:167px;top:705px;width:3px;height:1px;background:#e8e8e8;"></div>
<div style="left:633px;top:705px;width:3px;height:1px;background:#e8e8e8;"></div>
<div class="ax" style="left:131px;top:698px;width:34px;height:16px;line-height:16px;text-align:right;">125</div>
<div style="left:167px;top:725px;width:3px;height:1px;background:#e8e8e8;"></div>
<div style="left:633px;top:725px;width:3px;height:1px;background:#e8e8e8;"></div>
<div class="ax" style="left:131px;top:718px;width:34px;height:16px;line-height:16px;text-align:right;font-weight:bold;">119</div>
<div style="left:167px;top:745px;width:3px;height:1px;background:#e8e8e8;"></div>
<div style="left:633px;top:745px;width:3px;height:1px;background:#e8e8e8;"></div>
<div class="ax" style="left:131px;top:738px;width:34px;height:16px;line-height:16px;text-align:right;">113</div>
<div style="left:167px;top:765px;width:3px;height:1px;background:#e8e8e8;"></div>
<div style="left:633px;top:765px;width:3px;height:1px;background:#e8e8e8;"></div>
<div class="ax" style="left:131px;top:758px;width:34px;height:16px;line-height:16px;text-align:right;">107</div>
<div style="left:167px;top:785px;width:3px;height:1px;background:#e8e8e8;"></div>
<div style="left:633px;top:785px;width:3px;height:1px;background:#e8e8e8;"></div>
<div class="ax" style="left:131px;top:778px;width:34px;height:16px;line-height:16px;text-align:right;">101</div>
<div style="left:167px;top:805px;width:3px;height:1px;background:#e8e8e8;"></div>
<div style="left:633px;top:805px;width:3px;height:1px;background:#e8e8e8;"></div>
<div class="ax" style="left:131px;top:798px;width:34px;height:16px;line-height:16px;text-align:right;">95</div>
<div style="left:167px;top:825px;width:3px;height:1px;background:#e8e8e8;"></div>
<div style="left:633px;top:825px;width:3px;height:1px;background:#e8e8e8;"></div>
<div class="ax" style="left:131px;top:818px;width:34px;height:16px;line-height:16px;text-align:right;">89</div>
<div style="left:167px;top:845px;width:3px;height:1px;background:#e8e8e8;"></div>
<div style="left:633px;top:845px;width:3px;height:1px;background:#e8e8e8;"></div>
<div class="ax" style="left:131px;top:838px;width:34px;height:16px;line-height:16px;text-align:right;">83</div>
<div class="ax" style="left:203.5px;top:861px;width:41px;height:16px;line-height:16px;text-align:center;">10</div>
<div class="ax" style="left:327.5px;top:861px;width:41px;height:16px;line-height:16px;text-align:center;">50</div>
<div class="ax" style="left:380.5px;top:861px;width:41px;height:16px;line-height:16px;text-align:center;">100</div>
<div class="ax" style="left:503.5px;top:861px;width:41px;height:16px;line-height:16px;text-align:center;">500</div>
<div class="ax" style="left:556.5px;top:861px;width:41px;height:16px;line-height:16px;text-align:center;">1000</div>
<div class="ax" style="left:168px;top:861px;width:40px;height:16px;line-height:16px;text-align:left;">5 Hz</div>
<div class="ax" style="left:594px;top:861px;width:40px;height:16px;line-height:16px;text-align:right;">2000</div>
<div class="gt" style="left:188px;top:652px;width:400px;height:16px;line-height:16px;text-align:center;letter-spacing:-0.15px;">Maximum Acoustic Power (dBPWL/Hz)</div>
<div style="left:144px;top:650px;width:38px;height:16px;background:#000;"></div>
<div style="left:145px;top:651px;width:36px;height:14px;background:#716f64;"></div>
<div style="left:145px;top:651px;width:35px;height:13px;background:#fff;"></div>
<div style="left:146px;top:652px;width:34px;height:12px;background:#aca899;"></div>
<div style="left:146px;top:652px;width:33px;height:11px;background:#ece9d8;"></div>
<div class="t" style="left:145px;top:650px;width:35px;height:14px;line-height:14px;text-align:center;font-size:11px;letter-spacing:-0.5px;letter-spacing:-0.5px;">Clear</div>
<div style="left:148px;top:653px;width:30px;height:10px;border:1px dotted #000;"></div>
<div style="left:185px;top:650px;width:42px;height:16px;background:#716f64;"></div>
<div style="left:185px;top:650px;width:41px;height:15px;background:#fff;"></div>
<div style="left:186px;top:651px;width:40px;height:14px;background:#aca899;"></div>
<div style="left:186px;top:651px;width:39px;height:13px;background:#ece9d8;"></div>
<div class="t" style="left:185px;top:649px;width:41px;height:16px;line-height:16px;text-align:center;font-size:11px;letter-spacing:-0.5px;letter-spacing:-0.3px;">Cursor</div>
<div class="t" style="left:500px;top:651px;width:131px;height:16px;line-height:16px;text-align:right;color:#ffff00;font-size:11px;letter-spacing:-0.27px;">Therm. Limit: 119 dBPWL</div>
<div style="left:641px;top:642px;width:502px;height:238px;background:#000;"></div>
<div style="left:642px;top:643px;width:499px;height:235px;background:#c0c0c0;"></div>
<div style="left:644px;top:645px;width:497px;height:233px;background:#808080;"></div>
<svg style="left:675px;top:675px" width="461" height="181" viewBox="0 0 461 181" shape-rendering="crispEdges"><rect x="0" y="0" width="461" height="181" fill="#000"/><path d="M0.5 0V181 M14.5 0V181 M26.5 0V181 M36.5 0V181 M45.5 0V181 M53.5 0V181 M106.5 0V181 M137.5 0V181 M159.5 0V181 M177.5 0V181 M191.5 0V181 M202.5 0V181 M213.5 0V181 M222.5 0V181 M230.5 0V181 M283.5 0V181 M314.5 0V181 M336.5 0V181 M353.5 0V181 M367.5 0V181 M379.5 0V181 M389.5 0V181 M398.5 0V181 M406.5 0V181 M459.5 0V181 M0 10.5H461 M0 20.5H461 M0 30.5H461 M0 40.5H461 M0 50.5H461 M0 60.5H461 M0 70.5H461 M0 80.5H461 M0 90.5H461 M0 100.5H461 M0 110.5H461 M0 120.5H461 M0 130.5H461 M0 140.5H461 M0 150.5H461 M0 160.5H461 M0 170.5H461 M0 180.5H461 M0 0.5H461" stroke="#acacac" stroke-width="1" fill="none"/><g shape-rendering="auto"><polygon points="0.0,73.8 1.0,73.6 2.0,73.3 3.0,73.0 4.0,72.7 5.0,72.4 6.0,72.1 7.0,71.7 8.0,71.4 9.0,71.0 10.0,70.6 11.0,70.2 12.0,69.8 13.0,69.4 14.0,68.9 15.0,68.5 16.0,68.0 17.0,67.6 18.0,67.0 19.0,66.5 20.0,65.9 21.0,65.3 22.0,64.7 23.0,64.1 24.0,63.5 25.0,62.9 26.0,62.3 27.0,61.7 28.0,61.1 29.0,60.6 30.0,60.0 31.0,59.5 32.0,58.9 33.0,58.3 34.0,57.7 35.0,57.0 36.0,56.3 37.0,55.6 38.0,54.7 39.0,53.8 40.0,52.6 41.0,51.2 42.0,49.5 43.0,47.7 44.0,46.0 45.0,44.5 46.0,43.2 47.0,42.0 48.0,40.8 49.0,39.7 50.0,38.5 51.0,37.2 52.0,35.8 53.0,34.0 54.0,31.9 55.0,29.3 56.0,26.5 57.0,23.5 58.0,20.5 59.0,17.1 60.0,13.6 61.0,10.3 62.0,7.7 63.0,5.6 64.0,2.7 65.0,-5.0 66.0,-5.0 67.0,-5.0 68.0,-5.0 69.0,-5.0 70.0,-5.0 71.0,-5.0 72.0,-5.0 73.0,-5.0 74.0,-5.0 75.0,-5.0 76.0,-5.0 77.0,-5.0 78.0,-5.0 79.0,-5.0 80.0,-5.0 81.0,-5.0 82.0,-5.0 83.0,-5.0 84.0,-5.0 85.0,-5.0 86.0,-5.0 87.0,-5.0 88.0,-5.0 89.0,-5.0 90.0,-5.0 91.0,-5.0 92.0,-5.0 93.0,-5.0 94.0,-5.0 95.0,-5.0 96.0,-5.0 97.0,-5.0 98.0,-5.0 99.0,-5.0 100.0,-5.0 101.0,-5.0 102.0,-5.0 103.0,-5.0 104.0,-5.0 105.0,-5.0 106.0,-5.0 107.0,-5.0 108.0,-5.0 109.0,-5.0 110.0,-5.0 111.0,-5.0 112.0,-5.0 113.0,-5.0 114.0,-5.0 115.0,-5.0 116.0,-5.0 117.0,-5.0 118.0,-5.0 119.0,-5.0 120.0,-5.0 121.0,-5.0 122.0,-5.0 123.0,-5.0 124.0,-5.0 125.0,1.0 126.0,5.9 127.0,10.0 128.0,16.1 129.0,22.0 130.0,26.7 131.0,31.0 132.0,34.9 133.0,38.5 134.0,41.8 135.0,45.0 136.0,48.3 137.0,51.8 138.0,55.1 139.0,58.3 140.0,61.2 141.0,63.8 142.0,66.3 143.0,68.7 144.0,71.1 145.0,73.4 146.0,75.7 147.0,77.9 148.0,80.2 149.0,82.3 150.0,84.5 151.0,86.7 152.0,88.8 153.0,91.0 154.0,93.1 155.0,95.1 156.0,97.0 157.0,98.8 158.0,100.6 159.0,102.4 160.0,104.1 161.0,105.7 162.0,107.3 163.0,108.9 164.0,110.4 165.0,111.8 166.0,113.2 167.0,114.5 168.0,115.8 169.0,117.1 170.0,118.4 171.0,119.8 172.0,121.1 173.0,122.5 174.0,124.0 175.0,125.5 176.0,127.1 177.0,128.7 178.0,130.3 179.0,131.8 180.0,133.3 181.0,134.7 182.0,136.0 183.0,137.2 184.0,138.4 185.0,139.5 186.0,140.6 187.0,141.7 188.0,142.8 189.0,143.9 190.0,145.0 191.0,146.2 192.0,147.4 193.0,148.6 194.0,149.8 195.0,151.0 196.0,152.0 197.0,153.0 198.0,153.9 199.0,154.8 200.0,155.6 201.0,156.4 202.0,157.1 203.0,157.8 204.0,158.4 205.0,159.0 205.0,181.0 0.0,181.0" fill="#ff0000"/><polygon points="0.0,122.0 1.0,122.0 2.0,122.0 3.0,122.0 4.0,122.0 5.0,121.9 6.0,121.9 7.0,121.9 8.0,121.9 9.0,121.9 10.0,121.8 11.0,121.8 12.0,121.8 13.0,121.7 14.0,121.7 15.0,121.7 16.0,121.6 17.0,121.6 18.0,121.6 19.0,121.5 20.0,121.5 21.0,121.4 22.0,121.4 23.0,121.3 24.0,121.3 25.0,121.2 26.0,121.2 27.0,121.1 28.0,121.1 29.0,121.0 30.0,121.0 31.0,120.9 32.0,120.9 33.0,120.8 34.0,120.7 35.0,120.7 36.0,120.6 37.0,120.6 38.0,120.5 39.0,120.4 40.0,120.4 41.0,120.3 42.0,120.2 43.0,120.2 44.0,120.1 45.0,120.0 46.0,120.0 47.0,119.9 48.0,119.8 49.0,119.8 50.0,119.7 51.0,119.6 52.0,119.6 53.0,119.5 54.0,119.4 55.0,119.3 56.0,119.3 57.0,119.2 58.0,119.1 59.0,119.0 60.0,118.9 61.0,118.8 62.0,118.7 63.0,118.6 64.0,118.4 65.0,118.3 66.0,118.2 67.0,118.1 68.0,118.0 69.0,117.8 70.0,117.7 71.0,117.6 72.0,117.4 73.0,117.3 74.0,117.2 75.0,117.0 76.0,116.9 77.0,116.7 78.0,116.6 79.0,116.4 80.0,116.3 81.0,116.1 82.0,116.0 83.0,115.9 84.0,115.7 85.0,115.6 86.0,115.4 87.0,115.3 88.0,115.1 89.0,115.0 90.0,114.8 91.0,114.7 92.0,114.5 93.0,114.4 94.0,114.2 95.0,114.1 96.0,113.9 97.0,113.8 98.0,113.7 99.0,113.5 100.0,113.4 101.0,113.3 102.0,113.1 103.0,113.0 104.0,112.9 105.0,112.8 106.0,112.6 107.0,112.5 108.0,112.3 109.0,112.2 110.0,112.0 111.0,111.9 112.0,111.7 113.0,111.6 114.0,111.4 115.0,111.3 116.0,111.2 117.0,111.0 118.0,110.9 119.0,110.8 120.0,110.8 121.0,110.7 122.0,110.6 123.0,110.6 124.0,110.6 125.0,110.6 126.0,110.6 127.0,110.7 128.0,110.7 129.0,110.8 130.0,110.9 131.0,111.0 132.0,111.1 133.0,111.2 134.0,111.3 135.0,111.4 136.0,111.5 137.0,111.6 138.0,111.8 139.0,112.0 140.0,112.3 141.0,112.6 142.0,112.8 143.0,113.2 144.0,113.5 145.0,114.0 146.0,114.4 147.0,114.9 148.0,115.5 149.0,116.1 150.0,116.7 151.0,117.3 152.0,118.0 153.0,118.7 154.0,119.3 155.0,120.0 156.0,120.7 157.0,121.5 158.0,122.3 159.0,123.1 160.0,124.0 161.0,124.8 162.0,125.7 163.0,126.6 164.0,127.6 165.0,128.5 166.0,129.3 167.0,130.2 168.0,131.0 169.0,131.8 170.0,132.6 171.0,133.5 172.0,134.3 173.0,135.1 174.0,135.9 175.0,136.7 176.0,137.5 177.0,138.3 178.0,139.0 179.0,139.8 180.0,140.6 181.0,141.4 182.0,142.2 183.0,142.9 184.0,143.7 185.0,144.5 186.0,145.3 187.0,146.0 188.0,146.8 189.0,147.5 190.0,148.3 191.0,149.0 192.0,149.7 193.0,150.3 194.0,151.0 195.0,151.6 196.0,152.2 197.0,152.9 198.0,153.5 199.0,154.0 200.0,154.6 201.0,155.2 202.0,155.8 203.0,156.4 204.0,156.9 205.0,157.5 206.0,158.1 207.0,158.7 208.0,159.3 209.0,159.9 210.0,160.5 211.0,161.0 212.0,161.6 213.0,162.2 214.0,162.7 215.0,163.2 216.0,163.7 217.0,164.2 218.0,164.6 219.0,165.0 220.0,165.4 221.0,165.8 222.0,166.1 223.0,166.5 224.0,166.8 225.0,167.2 226.0,167.5 227.0,167.8 228.0,168.1 229.0,168.4 230.0,168.8 231.0,169.1 232.0,169.4 233.0,169.7 234.0,170.1 235.0,170.4 236.0,170.7 237.0,171.0 238.0,171.3 239.0,171.6 240.0,171.9 241.0,172.1 242.0,172.4 243.0,172.6 244.0,172.8 245.0,173.0 246.0,173.2 247.0,173.4 248.0,173.6 249.0,173.8 250.0,174.0 251.0,174.2 252.0,174.4 253.0,174.6 254.0,174.7 255.0,174.9 256.0,175.1 257.0,175.2 258.0,175.4 259.0,175.5 260.0,175.7 261.0,175.8 262.0,175.9 263.0,176.0 264.0,176.1 265.0,176.2 266.0,176.4 267.0,176.5 268.0,176.5 269.0,176.6 270.0,176.7 271.0,176.8 272.0,176.9 273.0,177.0 274.0,177.1 275.0,177.1 276.0,177.2 277.0,177.3 278.0,177.3 279.0,177.4 280.0,177.5 281.0,177.5 282.0,177.6 283.0,177.6 284.0,177.7 285.0,177.8 286.0,177.8 287.0,177.9 288.0,177.9 289.0,177.9 290.0,178.0 291.0,178.0 292.0,178.1 293.0,178.1 294.0,178.2 295.0,178.2 296.0,178.3 297.0,178.3 298.0,178.3 299.0,178.4 300.0,178.4 301.0,178.5 302.0,178.5 303.0,178.5 304.0,178.6 305.0,178.6 306.0,178.7 307.0,178.7 308.0,178.7 309.0,178.8 310.0,178.8 311.0,178.8 312.0,178.9 313.0,178.9 314.0,178.9 315.0,179.0 316.0,179.0 317.0,179.0 318.0,179.1 319.0,179.1 320.0,179.1 321.0,179.1 322.0,179.2 323.0,179.2 324.0,179.2 325.0,179.3 326.0,179.3 327.0,179.3 328.0,179.3 329.0,179.4 330.0,179.4 331.0,179.4 332.0,179.4 333.0,179.5 334.0,179.5 335.0,179.5 336.0,179.5 337.0,179.5 338.0,179.6 339.0,179.6 340.0,179.6 341.0,179.6 342.0,179.7 343.0,179.7 344.0,179.7 345.0,179.7 346.0,179.7 347.0,179.8 348.0,179.8 349.0,179.8 350.0,179.8 351.0,179.8 352.0,179.9 353.0,179.9 354.0,179.9 355.0,179.9 356.0,179.9 357.0,180.0 358.0,180.0 359.0,180.0 360.0,180.0 361.0,180.0 362.0,180.0 363.0,180.1 364.0,180.1 365.0,180.1 366.0,180.1 367.0,180.1 368.0,180.1 369.0,180.1 370.0,180.2 371.0,180.2 372.0,180.2 373.0,180.2 374.0,180.2 375.0,180.2 376.0,180.2 377.0,180.2 378.0,180.3 379.0,180.3 380.0,180.3 381.0,180.3 382.0,180.3 383.0,180.3 384.0,180.3 385.0,180.3 386.0,180.3 387.0,180.3 388.0,180.3 389.0,180.3 390.0,180.3 391.0,180.3 392.0,180.3 393.0,180.3 394.0,180.3 395.0,180.3 396.0,180.3 397.0,180.4 398.0,180.4 399.0,180.4 400.0,180.4 401.0,180.4 402.0,180.4 403.0,180.4 404.0,180.4 405.0,180.4 406.0,180.4 407.0,180.4 408.0,180.4 409.0,180.4 410.0,180.4 411.0,180.4 412.0,180.4 413.0,180.4 414.0,180.4 415.0,180.4 416.0,180.4 417.0,180.4 418.0,180.4 419.0,180.4 420.0,180.4 421.0,180.4 422.0,180.4 423.0,180.4 424.0,180.4 425.0,180.5 426.0,180.5 427.0,180.5 428.0,180.5 429.0,180.5 430.0,180.5 431.0,180.5 432.0,180.5 433.0,180.5 434.0,180.5 435.0,180.5 436.0,180.5 437.0,180.5 438.0,180.5 439.0,180.5 440.0,180.5 441.0,180.5 442.0,180.5 443.0,180.5 444.0,180.5 445.0,180.5 446.0,180.5 447.0,180.5 448.0,180.5 449.0,180.5 450.0,180.5 451.0,180.5 452.0,180.5 453.0,180.5 454.0,180.5 455.0,180.5 456.0,180.5 457.0,180.5 458.0,180.5 459.0,180.5 460.0,180.5 461.0,180.5 461.0,181.0 0.0,181.0" fill="#ffff00"/></g></svg>
<div style="left:674px;top:674px;width:2px;height:182px;background:#d0d0d0;"></div>
<div style="left:674px;top:674px;width:462px;height:2px;background:#d0d0d0;"></div>
<div style="left:675px;top:856px;width:1px;height:4px;background:#e8e8e8;"></div>
<div style="left:689px;top:856px;width:1px;height:4px;background:#e8e8e8;"></div>
<div style="left:701px;top:856px;width:1px;height:4px;background:#e8e8e8;"></div>
<div style="left:711px;top:856px;width:1px;height:4px;background:#e8e8e8;"></div>
<div style="left:720px;top:856px;width:1px;height:4px;background:#e8e8e8;"></div>
<div style="left:728px;top:856px;width:1px;height:4px;background:#e8e8e8;"></div>
<div style="left:781px;top:856px;width:1px;height:4px;background:#e8e8e8;"></div>
<div style="left:812px;top:856px;width:1px;height:4px;background:#e8e8e8;"></div>
<div style="left:834px;top:856px;width:1px;height:4px;background:#e8e8e8;"></div>
<div style="left:852px;top:856px;width:1px;height:4px;background:#e8e8e8;"></div>
<div style="left:866px;top:856px;width:1px;height:4px;background:#e8e8e8;"></div>
<div style="left:877px;top:856px;width:1px;height:4px;background:#e8e8e8;"></div>
<div style="left:888px;top:856px;width:1px;height:4px;background:#e8e8e8;"></div>
<div style="left:897px;top:856px;width:1px;height:4px;background:#e8e8e8;"></div>
<div style="left:905px;top:856px;width:1px;height:4px;background:#e8e8e8;"></div>
<div style="left:958px;top:856px;width:1px;height:4px;background:#e8e8e8;"></div>
<div style="left:989px;top:856px;width:1px;height:4px;background:#e8e8e8;"></div>
<div style="left:1011px;top:856px;width:1px;height:4px;background:#e8e8e8;"></div>
<div style="left:1028px;top:856px;width:1px;height:4px;background:#e8e8e8;"></div>
<div style="left:1042px;top:856px;width:1px;height:4px;background:#e8e8e8;"></div>
<div style="left:1054px;top:856px;width:1px;height:4px;background:#e8e8e8;"></div>
<div style="left:1064px;top:856px;width:1px;height:4px;background:#e8e8e8;"></div>
<div style="left:1073px;top:856px;width:1px;height:4px;background:#e8e8e8;"></div>
<div style="left:1081px;top:856px;width:1px;height:4px;background:#e8e8e8;"></div>
<div style="left:1134px;top:856px;width:1px;height:4px;background:#e8e8e8;"></div>
<div style="left:671px;top:675px;width:3px;height:1px;background:#e8e8e8;"></div>
<div style="left:1137px;top:675px;width:3px;height:1px;background:#e8e8e8;"></div>
<div class="ax" style="left:635px;top:666px;width:34px;height:16px;line-height:16px;text-align:right;">ms</div>
<div style="left:671px;top:695px;width:3px;height:1px;background:#e8e8e8;"></div>
<div style="left:1137px;top:695px;width:3px;height:1px;background:#e8e8e8;"></div>
<div class="ax" style="left:635px;top:688px;width:34px;height:16px;line-height:16px;text-align:right;">16</div>
<div style="left:671px;top:715px;width:3px;height:1px;background:#e8e8e8;"></div>
<div style="left:1137px;top:715px;width:3px;height:1px;background:#e8e8e8;"></div>
<div class="ax" style="left:635px;top:708px;width:34px;height:16px;line-height:16px;text-align:right;">14</div>
<div style="left:671px;top:735px;width:3px;height:1px;background:#e8e8e8;"></div>
<div style="left:1137px;top:735px;width:3px;height:1px;background:#e8e8e8;"></div>
<div class="ax" style="left:635px;top:728px;width:34px;height:16px;line-height:16px;text-align:right;">12</div>
<div style="left:671px;top:755px;width:3px;height:1px;background:#e8e8e8;"></div>
<div style="left:1137px;top:755px;width:3px;height:1px;background:#e8e8e8;"></div>
<div class="ax" style="left:635px;top:748px;width:34px;height:16px;line-height:16px;text-align:right;">10</div>
<div style="left:671px;top:775px;width:3px;height:1px;background:#e8e8e8;"></div>
<div style="left:1137px;top:775px;width:3px;height:1px;background:#e8e8e8;"></div>
<div class="ax" style="left:635px;top:768px;width:34px;height:16px;line-height:16px;text-align:right;">8</div>
<div style="left:671px;top:795px;width:3px;height:1px;background:#e8e8e8;"></div>
<div style="left:1137px;top:795px;width:3px;height:1px;background:#e8e8e8;"></div>
<div class="ax" style="left:635px;top:788px;width:34px;height:16px;line-height:16px;text-align:right;">6</div>
<div style="left:671px;top:815px;width:3px;height:1px;background:#e8e8e8;"></div>
<div style="left:1137px;top:815px;width:3px;height:1px;background:#e8e8e8;"></div>
<div class="ax" style="left:635px;top:808px;width:34px;height:16px;line-height:16px;text-align:right;">4</div>
<div style="left:671px;top:835px;width:3px;height:1px;background:#e8e8e8;"></div>
<div style="left:1137px;top:835px;width:3px;height:1px;background:#e8e8e8;"></div>
<div class="ax" style="left:635px;top:828px;width:34px;height:16px;line-height:16px;text-align:right;">2</div>
<div style="left:671px;top:855px;width:3px;height:1px;background:#e8e8e8;"></div>
<div style="left:1137px;top:855px;width:3px;height:1px;background:#e8e8e8;"></div>
<div class="ax" style="left:635px;top:848px;width:34px;height:16px;line-height:16px;text-align:right;">0</div>
<div class="ax" style="left:707.5px;top:861px;width:41px;height:16px;line-height:16px;text-align:center;">10</div>
<div class="ax" style="left:831.5px;top:861px;width:41px;height:16px;line-height:16px;text-align:center;">50</div>
<div class="ax" style="left:884.5px;top:861px;width:41px;height:16px;line-height:16px;text-align:center;">100</div>
<div class="ax" style="left:1007.5px;top:861px;width:41px;height:16px;line-height:16px;text-align:center;">500</div>
<div class="ax" style="left:1060.5px;top:861px;width:41px;height:16px;line-height:16px;text-align:center;">1000</div>
<div class="ax" style="left:672px;top:861px;width:40px;height:16px;line-height:16px;text-align:left;">5 Hz</div>
<div class="ax" style="left:1098px;top:861px;width:40px;height:16px;line-height:16px;text-align:right;">2000</div>
<div class="gt" style="left:690px;top:652px;width:400px;height:16px;line-height:16px;text-align:center;letter-spacing:-0.15px;">Group Delay (Milliseconds/Hz)</div>
<div style="left:648px;top:650px;width:38px;height:16px;background:#000;"></div>
<div style="left:649px;top:651px;width:36px;height:14px;background:#716f64;"></div>
<div style="left:649px;top:651px;width:35px;height:13px;background:#fff;"></div>
<div style="left:650px;top:652px;width:34px;height:12px;background:#aca899;"></div>
<div style="left:650px;top:652px;width:33px;height:11px;background:#ece9d8;"></div>
<div class="t" style="left:649px;top:650px;width:35px;height:14px;line-height:14px;text-align:center;font-size:11px;letter-spacing:-0.5px;letter-spacing:-0.5px;">Clear</div>
<div style="left:689px;top:650px;width:42px;height:16px;background:#716f64;"></div>
<div style="left:689px;top:650px;width:41px;height:15px;background:#fff;"></div>
<div style="left:690px;top:651px;width:40px;height:14px;background:#aca899;"></div>
<div style="left:690px;top:651px;width:39px;height:13px;background:#ece9d8;"></div>
<div class="t" style="left:689px;top:649px;width:41px;height:16px;line-height:16px;text-align:center;font-size:11px;letter-spacing:-0.5px;letter-spacing:-0.3px;">Cursor</div>
</div></body></html>
